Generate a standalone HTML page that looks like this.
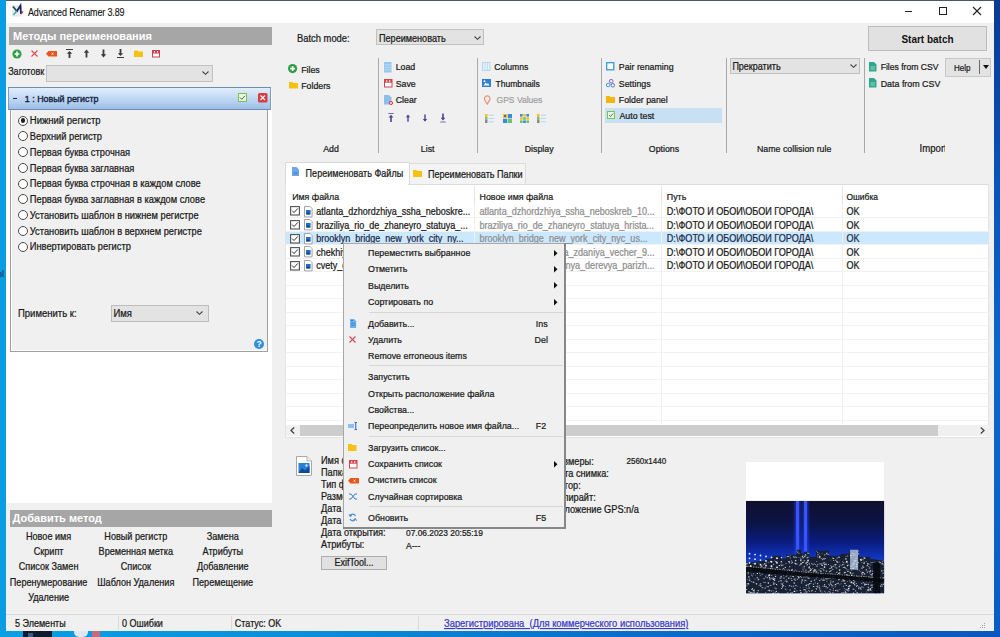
<!DOCTYPE html>
<html><head><meta charset="utf-8">
<style>
html,body{margin:0;padding:0;}
body{width:1000px;height:637px;overflow:hidden;position:relative;background:#0b62c8;font-family:"Liberation Sans",sans-serif;font-size:9px;color:#1a1a1a;}
.a{position:absolute;}
.t{position:absolute;white-space:nowrap;line-height:12px;height:12px;-webkit-text-stroke:0.22px currentColor;transform:translateY(0.9px) scaleY(1.12);transform-origin:0 76%;}
.c{text-align:center;}
svg{position:absolute;overflow:visible;}
</style></head><body>
<!-- desktop -->
<div class="a" style="left:0;top:0;width:6px;height:637px;background:#0a9de2;"></div>
<div class="a" style="left:994px;top:0;width:6px;height:637px;background:linear-gradient(#0a3a92 0%,#0a50b5 25%,#0c64cc 55%,#0b62ca 80%,#0a5cc4 100%);"></div>
<div class="a" style="left:0;top:631px;width:1000px;height:6px;background:linear-gradient(90deg,#0aa0e4 0%,#0a8fd8 30%,#0a6fcc 60%,#0a56bf 100%);"></div>

<div class="a" style="left:22.5px;top:631px;width:29px;height:6px;background:#0d1a30;"></div>
<div class="a" style="left:28px;top:633px;width:5px;height:4px;background:#3a5a8a;"></div>
<div class="a" style="left:74px;top:631px;width:14px;height:6px;background:#dfe8ee;border-radius:0 0 5px 5px;"></div>
<div class="a" style="left:92px;top:631px;width:8px;height:6px;background:#c86a7a;"></div>
<div class="a" style="left:0;top:270px;width:5px;height:8px;overflow:hidden;"><div style="position:absolute;left:-3px;top:-2px;font-size:9px;color:#1a2a3a;line-height:12px;">ol</div></div>
<!-- window -->
<div class="a" id="win" style="left:6px;top:0;width:988px;height:631px;background:#f0f0f0;">
</div>
<div class="a" style="left:6px;top:0;width:988px;height:1px;background:#4d5866;"></div>
<div class="a" style="left:6px;top:1px;width:988px;height:22px;background:#fff;"></div>


<!-- title bar -->
<svg style="left:12px;top:5px" width="12" height="12" viewBox="0 0 12 12">
 <rect x="0" y="0" width="9" height="11.5" fill="#e6ecf2"/>
 <path d="M1 1.5L5.5 7" stroke="#34404c" stroke-width="1.7" fill="none"/>
 <path d="M1.5 10L6 4" stroke="#4cae9c" stroke-width="1.5" fill="none"/>
 <path d="M5 6L8.5 0.5L9 9" stroke="#1c2462" stroke-width="1.8" fill="none"/>
 <path d="M8.8 9L11 6.5" stroke="#a8384a" stroke-width="1.4" fill="none"/>
</svg>
<div class="t" style="left:28px;top:5.6px;font-size:9px;letter-spacing:-0.15px;color:#111;-webkit-text-stroke:0.1px #111;">Advanced Renamer 3.89</div>
<div class="a" style="left:905px;top:11px;width:7px;height:1px;background:#222;"></div>
<div class="a" style="left:938.5px;top:7px;width:6px;height:6px;border:1.2px solid #222;"></div>
<svg style="left:973px;top:7px" width="8" height="8" viewBox="0 0 8 8"><path d="M0 0L8 8M8 0L0 8" stroke="#222" stroke-width="1.1"/></svg>

<!-- left panel top -->
<div class="a" style="left:6px;top:88px;width:266px;height:415px;background:#fff;"></div>
<div class="a" style="left:9px;top:27px;width:263px;height:18px;background:#a6a6a6;"></div>
<div class="t" style="left:13px;top:30px;font-size:11px;font-weight:bold;color:#fff;-webkit-text-stroke:0;transform:translateY(0.3px) scaleY(1.05);">Методы переименования</div>


<!-- left toolbar icons -->
<svg style="left:11.7px;top:48.8px" width="10" height="10" viewBox="0 0 10 10"><circle cx="5" cy="5" r="4.6" fill="#2f9e44"/><path d="M5 2.6V7.4M2.6 5H7.4" stroke="#fff" stroke-width="1.6"/></svg>
<svg style="left:30.6px;top:50.4px" width="7" height="7" viewBox="0 0 7 7"><path d="M0.5 0.5L6.5 6.5M6.5 0.5L0.5 6.5" stroke="#e0474c" stroke-width="1.1"/></svg>
<svg style="left:46px;top:51px" width="11" height="5.5" viewBox="0 0 11 5.5"><path d="M2.5 0H11V5.5H2.5L0 2.75Z" fill="#e8561e"/><path d="M5.5 1.8L7.5 3.7M7.5 1.8L5.5 3.7" stroke="#fff" stroke-width="0.8"/></svg>
<svg style="left:65.8px;top:48.8px" width="7" height="9" viewBox="0 0 7 9"><path d="M0 0.5H7" stroke="#3b3b3b" stroke-width="1"/><path d="M3.5 2L0.8 4.8H2.6V9H4.4V4.8H6.2Z" fill="#3b3b3b"/></svg>
<svg style="left:83px;top:48.8px" width="7" height="9" viewBox="0 0 7 9"><path d="M3.5 0.5L0.8 3.8H2.6V8.5H4.4V3.8H6.2Z" fill="#3b3b3b"/></svg>
<svg style="left:100px;top:48.8px" width="7" height="9" viewBox="0 0 7 9"><path d="M3.5 8.5L0.8 5.2H2.6V0.5H4.4V5.2H6.2Z" fill="#3b3b3b"/></svg>
<svg style="left:116.8px;top:48.8px" width="7" height="9" viewBox="0 0 7 9"><path d="M3.5 7L0.8 4.2H2.6V0H4.4V4.2H6.2Z" fill="#3b3b3b"/><path d="M0 8.5H7" stroke="#3b3b3b" stroke-width="1"/></svg>
<svg style="left:133.8px;top:49.9px" width="9" height="7" viewBox="0 0 9 7"><path d="M0 0.5H3.5L4.5 1.5H9V7H0Z" fill="#f5c211"/></svg>
<svg style="left:151.9px;top:49.6px" width="8" height="7.5" viewBox="0 0 8 7.5"><rect x="0.5" y="0.5" width="7" height="6.5" fill="#fff" stroke="#c9434b" stroke-width="1"/><rect x="0.5" y="0.5" width="7" height="3" fill="#c9434b"/><rect x="2" y="1" width="1" height="1.5" fill="#fff"/><rect x="5" y="1" width="1" height="1.5" fill="#fff"/></svg>

<div class="t" style="left:8.2px;top:64.5px;font-size:9px;">Заготовк</div>
<div class="a" style="left:45.8px;top:65.3px;width:165.2px;height:14.3px;background:#e3e3e3;border:1px solid #c2c2c2;"></div>
<svg style="left:202px;top:71px" width="7" height="4" viewBox="0 0 7 4"><path d="M0.5 0.5L3.5 3.3L6.5 0.5" stroke="#444" stroke-width="1.1" fill="none"/></svg>

<!-- blue panel header -->
<div class="a" style="left:8px;top:87.4px;width:260.5px;height:20.6px;border:1px solid #7f9fc0;border-top-color:#6d8fa8;border-bottom-color:#6d8bb3;background:linear-gradient(#e2eefb,#c4daf4 45%,#9ebfea);"></div>
<div class="a" style="left:13.4px;top:98px;width:3.6px;height:1.2px;background:#1b2b48;"></div>
<div class="t" style="left:24.8px;top:92.4px;font-size:8.9px;color:#16243f;-webkit-text-stroke:0.35px #16243f;">1 : Новый регистр</div>
<svg style="left:237.5px;top:93px" width="9" height="9" viewBox="0 0 9 9"><rect x="0.5" y="0.5" width="8" height="8" fill="#e9f6df" stroke="#7cc05a" stroke-width="1"/><path d="M2 4.5L3.8 6.3L7 2.8" stroke="#3a7a2a" stroke-width="1" fill="none"/></svg>
<svg style="left:257.8px;top:92.5px" width="9.5" height="9.5" viewBox="0 0 9.5 9.5"><rect x="0" y="0" width="9.5" height="9.5" rx="1.5" fill="#d83c3c"/><path d="M2.5 2.5L7 7M7 2.5L2.5 7" stroke="#fff" stroke-width="1.1"/></svg>

<!-- panel box -->
<div class="a" style="left:10.2px;top:110px;width:256.3px;height:240.8px;border:1px solid #a0a0a0;border-top:none;background:#f0f0f0;box-shadow:inset 1px 0 0 #fff, inset 0 -1px 0 #fff;"></div>
<div class="a" style="left:18.2px;top:115.60px;width:8px;height:8px;border:0.8px solid #4a4a4a;border-radius:50%;background:#fff;"></div>
<div class="a" style="left:20.6px;top:118.00px;width:4.8px;height:4.8px;border-radius:50%;background:#222;"></div>
<div class="t" style="left:29.8px;top:114.40px;font-size:9.5px;">Нижний регистр</div>
<div class="a" style="left:18.2px;top:131.35px;width:8px;height:8px;border:0.8px solid #4a4a4a;border-radius:50%;background:#fff;"></div>
<div class="t" style="left:29.8px;top:130.15px;font-size:9.3px;">Верхний регистр</div>
<div class="a" style="left:18.2px;top:147.10px;width:8px;height:8px;border:0.8px solid #4a4a4a;border-radius:50%;background:#fff;"></div>
<div class="t" style="left:29.8px;top:145.90px;font-size:9.3px;">Первая буква строчная</div>
<div class="a" style="left:18.2px;top:162.85px;width:8px;height:8px;border:0.8px solid #4a4a4a;border-radius:50%;background:#fff;"></div>
<div class="t" style="left:29.8px;top:161.65px;font-size:9.3px;">Первая буква заглавная</div>
<div class="a" style="left:18.2px;top:178.60px;width:8px;height:8px;border:0.8px solid #4a4a4a;border-radius:50%;background:#fff;"></div>
<div class="t" style="left:29.8px;top:177.40px;font-size:9.3px;">Первая буква строчная в каждом слове</div>
<div class="a" style="left:18.2px;top:194.35px;width:8px;height:8px;border:0.8px solid #4a4a4a;border-radius:50%;background:#fff;"></div>
<div class="t" style="left:29.8px;top:193.15px;font-size:9.3px;">Первая буква заглавная в каждом слове</div>
<div class="a" style="left:18.2px;top:210.10px;width:8px;height:8px;border:0.8px solid #4a4a4a;border-radius:50%;background:#fff;"></div>
<div class="t" style="left:29.8px;top:208.90px;font-size:9.3px;">Установить шаблон в нижнем регистре</div>
<div class="a" style="left:18.2px;top:225.85px;width:8px;height:8px;border:0.8px solid #4a4a4a;border-radius:50%;background:#fff;"></div>
<div class="t" style="left:29.8px;top:224.65px;font-size:9.3px;">Установить шаблон в верхнем регистре</div>
<div class="a" style="left:18.2px;top:241.60px;width:8px;height:8px;border:0.8px solid #4a4a4a;border-radius:50%;background:#fff;"></div>
<div class="t" style="left:29.8px;top:240.40px;font-size:9.3px;">Инвертировать регистр</div>

<div class="t" style="left:18px;top:307px;font-size:9.5px;">Применить к:</div>
<div class="a" style="left:110.5px;top:305.3px;width:96px;height:14.6px;background:#e3e3e3;border:1px solid #bdbdbd;"></div>
<div class="t" style="left:113.5px;top:307px;font-size:9.5px;">Имя</div>
<svg style="left:196px;top:311px" width="7" height="4" viewBox="0 0 7 4"><path d="M0.5 0.5L3.5 3.3L6.5 0.5" stroke="#444" stroke-width="1.1" fill="none"/></svg>
<svg style="left:254px;top:339px" width="10" height="10" viewBox="0 0 10 10"><circle cx="5" cy="5" r="5" fill="#2d8fd8"/><text x="5" y="8.3" font-size="8.5" font-weight="bold" text-anchor="middle" fill="#fff" font-family="Liberation Sans">?</text></svg>


<!-- add method -->
<div class="a" style="left:9.8px;top:509.8px;width:261.8px;height:16.8px;background:#a6a6a6;"></div>
<div class="t" style="left:12.6px;top:512px;font-size:11px;font-weight:bold;color:#fff;-webkit-text-stroke:0;transform:translateY(0.3px) scaleY(1.05);">Добавить метод</div>
<div class="t c" style="left:-1.4px;width:100px;top:530.4px;font-size:9.1px;">Новое имя</div>
<div class="t c" style="left:85.8px;width:100px;top:530.4px;font-size:9.1px;">Новый регистр</div>
<div class="t c" style="left:172.8px;width:100px;top:530.4px;font-size:9.1px;">Замена</div>
<div class="t c" style="left:-1.4px;width:100px;top:545.2px;font-size:9.1px;">Скрипт</div>
<div class="t c" style="left:85.8px;width:100px;top:545.2px;font-size:9.1px;">Временная метка</div>
<div class="t c" style="left:172.8px;width:100px;top:545.2px;font-size:9.1px;">Атрибуты</div>
<div class="t c" style="left:-1.4px;width:100px;top:560.4px;font-size:9.1px;">Список Замен</div>
<div class="t c" style="left:85.8px;width:100px;top:560.4px;font-size:9.1px;">Список</div>
<div class="t c" style="left:172.8px;width:100px;top:560.4px;font-size:9.1px;">Добавление</div>
<div class="t c" style="left:-1.4px;width:100px;top:575.5px;font-size:9.1px;">Перенумерование</div>
<div class="t c" style="left:85.8px;width:100px;top:575.5px;font-size:9.1px;">Шаблон Удаления</div>
<div class="t c" style="left:172.8px;width:100px;top:575.5px;font-size:9.1px;">Перемещение</div>
<div class="t c" style="left:-1.4px;width:100px;top:590.6px;font-size:9.1px;">Удаление</div>

<!-- status bar -->
<div class="a" style="left:6px;top:614px;width:988px;height:1px;background:#dadada;"></div>
<div class="a" style="left:118px;top:616px;width:1px;height:14px;background:#dadada;"></div>
<div class="a" style="left:231px;top:616px;width:1px;height:14px;background:#dadada;"></div>
<div class="a" style="left:418px;top:616px;width:1px;height:14px;background:#dadada;"></div>
<div class="t" style="left:15px;top:617px;font-size:9px;">5 Элементы</div>
<div class="t" style="left:122px;top:617px;font-size:9px;">0 Ошибки</div>
<div class="t" style="left:234.8px;top:617px;font-size:9px;">Статус: OK</div>
<div class="t" style="left:444px;top:617px;font-size:9.4px;color:#3a3ac8;text-decoration:underline;">Зарегистрирована &nbsp;(Для коммерческого использования)</div>

<div class="a" style="left:984px;top:627px;width:1px;height:1px;background:#a0a0a0;"></div><div class="a" style="left:982px;top:627px;width:1px;height:1px;background:#a0a0a0;"></div><div class="a" style="left:980px;top:627px;width:1px;height:1px;background:#a0a0a0;"></div><div class="a" style="left:984px;top:625px;width:1px;height:1px;background:#a0a0a0;"></div><div class="a" style="left:982px;top:625px;width:1px;height:1px;background:#a0a0a0;"></div><div class="a" style="left:984px;top:623px;width:1px;height:1px;background:#a0a0a0;"></div>
<!-- ribbon -->
<div class="t" style="left:297px;top:32.0px;font-size:9.4px;">Batch mode:</div>
<div class="a" style="left:376px;top:29px;width:105.6px;height:14.4px;background:#e3e3e3;border:1px solid #c0c0c0;"></div>
<div class="t" style="left:379px;top:31.5px;font-size:9.1px;">Переименовать</div>
<svg style="left:474px;top:35.5px" width="7" height="4" viewBox="0 0 7 4"><path d="M0.5 0.5L3.5 3.3L6.5 0.5" stroke="#444" stroke-width="1.1" fill="none"/></svg>
<div class="a" style="left:868px;top:26.3px;width:117px;height:22.6px;background:#e1e1e1;border:1px solid #bdbdbd;"></div>
<div class="t c" style="left:877.5px;width:100px;top:33px;font-size:10px;font-weight:bold;color:#111;-webkit-text-stroke:0;">Start batch</div>
<div class="a" style="left:378.0px;top:58px;width:1px;height:95px;background:#a8a8a8;"></div>
<div class="a" style="left:477.2px;top:58px;width:1px;height:95px;background:#a8a8a8;"></div>
<div class="a" style="left:601.4px;top:58px;width:1px;height:95px;background:#a8a8a8;"></div>
<div class="a" style="left:725.9px;top:58px;width:1px;height:95px;background:#a8a8a8;"></div>
<div class="a" style="left:863.6px;top:58px;width:1px;height:95px;background:#a8a8a8;"></div>
<svg style="left:287.9px;top:64.4px" width="9.2" height="9.2" viewBox="0 0 10 10"><circle cx="5" cy="5" r="5" fill="#2f9e44"/><path d="M5 2.4V7.6M2.4 5H7.6" stroke="#fff" stroke-width="1.8"/></svg>
<svg style="left:288.5px;top:82px" width="9" height="6.5" viewBox="0 0 9 6.5"><path d="M0 0H3.5L4.5 1H9V6.5H0Z" fill="#f5c211"/></svg>
<div class="t" style="left:301.2px;top:63.0px;font-size:8.8px;">Files</div>
<div class="t" style="left:301.2px;top:79.4px;font-size:8.8px;">Folders</div>
<div class="t c" style="left:281px;width:100px;top:141.5px;font-size:8.8px;">Add</div>
<svg style="left:383.5px;top:61.5px" width="8" height="10" viewBox="0 0 8 10"><rect x="0" y="0" width="7.5" height="10.5" fill="#94c7ef"/><path d="M0.5 2.8H7M0.5 5.3H7M0.5 7.8H7" stroke="#cfe5f8" stroke-width="0.7"/></svg>
<svg style="left:383.5px;top:78.5px" width="8.5" height="8.5" viewBox="0 0 8.5 8.5"><rect x="0.5" y="0.5" width="7.5" height="7.5" fill="#fff" stroke="#d2464e" stroke-width="1"/><rect x="0.5" y="0.5" width="7.5" height="3.2" fill="#d2464e"/><rect x="2.2" y="1.2" width="1.1" height="1.6" fill="#fff"/><rect x="5.2" y="1.2" width="1.1" height="1.6" fill="#fff"/></svg>
<svg style="left:383.5px;top:94.5px" width="9.5" height="10" viewBox="0 0 9.5 10"><path d="M0 0H5L7.5 2.5V9.5H0Z" fill="#8dbde9"/><circle cx="7" cy="8" r="1.6" fill="#f4d0d0" stroke="#d84040" stroke-width="1"/></svg>
<div class="t" style="left:395.7px;top:60.4px;font-size:8.8px;">Load</div>
<div class="t" style="left:395.7px;top:76.8px;font-size:8.8px;">Save</div>
<div class="t" style="left:395.7px;top:93.2px;font-size:8.8px;">Clear</div>
<svg style="left:387.9px;top:112.6px" width="6" height="9.5" viewBox="0 0 6 9.5"><path d="M0.3 0.5H5.7" stroke="#50508a" stroke-width="0.8"/><path d="M3 1.8L0.6 4.6H2.2V9H3.8V4.6H5.4Z" fill="#46468a"/></svg>
<svg style="left:405.1px;top:112.6px" width="6" height="9.5" viewBox="0 0 6 9.5"><path d="M3 1.5L0.8 4.2H2.3V8.8H3.7V4.2H5.2Z" fill="#46468a"/></svg>
<svg style="left:422px;top:112.6px" width="6" height="9.5" viewBox="0 0 6 9.5"><path d="M3 8.8L0.8 6H2.3V1.5H3.7V6H5.2Z" fill="#46468a"/></svg>
<svg style="left:439.7px;top:112.6px" width="6" height="9.5" viewBox="0 0 6 9.5"><path d="M3 7.6L0.6 4.8H2.2V0.5H3.8V4.8H5.4Z" fill="#46468a"/><path d="M0.3 9H5.7" stroke="#50508a" stroke-width="0.8"/></svg>
<div class="t c" style="left:377.7px;width:100px;top:141.8px;font-size:8.8px;">List</div>
<svg style="left:482px;top:62px" width="8.5" height="9" viewBox="0 0 8.5 9"><rect x="0.5" y="0.5" width="7.5" height="8" fill="#e6f2fb" stroke="#b5d6f0" stroke-width="1"/><path d="M3 0.5V8.5M5.5 0.5V8.5" stroke="#b5d6f0" stroke-width="0.8"/></svg>
<svg style="left:482px;top:78.5px" width="9" height="8" viewBox="0 0 9 8"><rect x="0" y="0" width="9" height="8" fill="#2f7fd0"/><path d="M1.5 6.5L3.5 3.5L5 5L6 4L7.5 6.5Z" fill="#fff"/><circle cx="2.5" cy="2.2" r="0.9" fill="#fff"/></svg>
<svg style="left:483.5px;top:94.5px" width="6.5" height="9.5" viewBox="0 0 6.5 9.5"><path d="M3.25 9L0.8 5A2.8 2.8 0 1 1 5.7 5Z" fill="none" stroke="#ec8c6c" stroke-width="1.2"/></svg>
<div class="t" style="left:494.3px;top:60.4px;font-size:8.6px;">Columns</div>
<div class="t" style="left:495.4px;top:76.8px;font-size:8.6px;">Thumbnails</div>
<div class="t" style="left:496.6px;top:93.2px;font-size:8.5px;color:#a0a0a0;">GPS Values</div>
<svg style="left:485.2px;top:113.5px" width="9" height="9" viewBox="0 0 9 9"><rect x="0" y="0" width="2.5" height="3" fill="#f2c12e"/><rect x="0" y="3" width="2.5" height="3" fill="#7bc47f"/><rect x="0" y="6" width="2.5" height="3" fill="#8a8a8a"/><path d="M3.5 1.2H9M3.5 4.5H9M3.5 7.8H9" stroke="#b9d6ee" stroke-width="1"/></svg>
<svg style="left:502.5px;top:113.5px" width="9" height="9" viewBox="0 0 9 9"><rect x="0" y="0" width="4.2" height="4.2" fill="#f2c12e"/><rect x="4.8" y="0" width="4.2" height="4.2" fill="#3a8ad8"/><rect x="0" y="4.8" width="4.2" height="4.2" fill="#3a8ad8"/><rect x="4.8" y="4.8" width="4.2" height="4.2" fill="#6cc070"/><rect x="1" y="1" width="2" height="2" fill="#4a6ab0"/></svg>
<svg style="left:519.7px;top:113.5px" width="9" height="9" viewBox="0 0 9 9"><rect x="0" y="0" width="2.6" height="2.6" fill="#3a8ad8"/><rect x="3.2" y="0" width="2.6" height="2.6" fill="#f2c12e"/><rect x="6.4" y="0" width="2.6" height="2.6" fill="#3a8ad8"/><rect x="0" y="3.2" width="2.6" height="2.6" fill="#f2c12e"/><rect x="3.2" y="3.2" width="2.6" height="2.6" fill="#6cc070"/><rect x="6.4" y="3.2" width="2.6" height="2.6" fill="#f2c12e"/><rect x="0" y="6.4" width="2.6" height="2.6" fill="#6cc070"/><rect x="3.2" y="6.4" width="2.6" height="2.6" fill="#3a8ad8"/><rect x="6.4" y="6.4" width="2.6" height="2.6" fill="#6cc070"/></svg>
<svg style="left:537.0px;top:113.5px" width="9" height="9" viewBox="0 0 9 9"><rect x="0" y="0" width="2.5" height="3" fill="#f2c12e"/><rect x="0" y="3" width="2.5" height="3" fill="#7bc47f"/><rect x="0" y="6" width="2.5" height="3" fill="#8a8a8a"/><path d="M3.5 1.2H9M3.5 4.5H9M3.5 7.8H9" stroke="#b9d6ee" stroke-width="1"/></svg>
<div class="t c" style="left:489.20000000000005px;width:100px;top:141.8px;font-size:8.8px;">Display</div>
<div class="a" style="left:605px;top:107.5px;width:117.2px;height:15.3px;background:#c7e0f4;"></div>
<svg style="left:606px;top:62px" width="8.5" height="8.5" viewBox="0 0 8.5 8.5"><rect x="0.7" y="0.7" width="7.1" height="7.1" fill="#fff" stroke="#3a9ad9" stroke-width="1.3"/></svg>
<svg style="left:606px;top:78.5px" width="9" height="8.5" viewBox="0 0 9 8.5"><circle cx="5.2" cy="2.2" r="1.8" fill="none" stroke="#6a6ad0" stroke-width="1"/><circle cx="2.2" cy="6" r="1.8" fill="none" stroke="#3a9ad9" stroke-width="1"/><circle cx="6.8" cy="6.3" r="1.8" fill="none" stroke="#6a6ad0" stroke-width="1"/></svg>
<svg style="left:606px;top:95.5px" width="9" height="7" viewBox="0 0 9 7"><path d="M0 0H3.5L4.5 1H9V7H0Z" fill="#f5b50f"/></svg>
<svg style="left:606.5px;top:111px" width="8" height="8" viewBox="0 0 8 8"><rect x="0.5" y="0.5" width="7" height="7" fill="#e8f5de" stroke="#7cc05a" stroke-width="1"/><path d="M2 4L3.5 5.5L6.2 2.5" stroke="#3a7a2a" stroke-width="0.9" fill="none"/></svg>
<div class="t" style="left:618.8px;top:60.4px;font-size:8.8px;">Pair renaming</div>
<div class="t" style="left:618.8px;top:76.8px;font-size:8.8px;">Settings</div>
<div class="t" style="left:618.8px;top:93.2px;font-size:8.8px;">Folder panel</div>
<div class="t" style="left:619.5px;top:109.2px;font-size:8.8px;">Auto test</div>
<div class="t c" style="left:614px;width:100px;top:141.8px;font-size:8.8px;">Options</div>
<div class="a" style="left:729.5px;top:57.8px;width:128.3px;height:14px;background:#e3e3e3;border:1px solid #c0c0c0;"></div>
<div class="t" style="left:732.4px;top:60.0px;font-size:9px;">Прекратить</div>
<svg style="left:850px;top:64px" width="7" height="4" viewBox="0 0 7 4"><path d="M0.5 0.5L3.5 3.3L6.5 0.5" stroke="#444" stroke-width="1.1" fill="none"/></svg>
<div class="t c" style="left:744.2px;width:100px;top:141.8px;font-size:8.8px;">Name collision rule</div>
<svg style="left:869px;top:61.900000000000006px" width="7.5" height="9.5" viewBox="0 0 7.5 9.5"><path d="M0 0H5L7.5 2.5V9.5H0Z" fill="#2fa98a"/><path d="M1.5 5H6M1.5 7H6" stroke="#bfe8da" stroke-width="0.7"/></svg>
<svg style="left:869px;top:78.3px" width="7.5" height="9.5" viewBox="0 0 7.5 9.5"><path d="M0 0H5L7.5 2.5V9.5H0Z" fill="#2fa98a"/><path d="M1.5 5H6M1.5 7H6" stroke="#bfe8da" stroke-width="0.7"/></svg>
<div class="t" style="left:880.7px;top:60.4px;font-size:8.6px;">Files from CSV</div>
<div class="t" style="left:880.7px;top:76.8px;font-size:8.9px;">Data from CSV</div>
<div class="a" style="left:945.1px;top:58.3px;width:43.7px;height:16.9px;background:#e3e3e3;border:1px solid #c8c8c8;"></div>
<div class="a" style="left:978.5px;top:60px;width:1.6px;height:14px;background:#6a6a6a;"></div>
<svg style="left:982.5px;top:65px" width="6" height="4" viewBox="0 0 6 4"><path d="M0 0H6L3 4Z" fill="#111"/></svg>
<div class="t" style="left:954px;top:61.5px;font-size:8px;">Help</div>
<div class="a" style="left:919.6px;top:141.8px;width:25.4px;height:13px;overflow:hidden;"><div class="t" style="left:0;top:0;font-size:9.6px;">Import</div></div>

<!-- list -->
<div class="a" style="left:409px;top:162.7px;width:115.2px;height:20px;background:#f4f4f4;border:1px solid #dcdcdc;border-bottom:none;"></div>
<div class="a" style="left:284.6px;top:161.8px;width:123.4px;height:22px;background:#fff;border:1px solid #d9d9d9;border-bottom:none;"></div>
<svg style="left:292.2px;top:167.3px" width="7" height="9" viewBox="0 0 7 9"><path d="M0 0H4.5L7 2.5V9H0Z" fill="#6fa8e6"/><path d="M1.3 5.5H5.7M1.3 7H5.7" stroke="#3d7fd0" stroke-width="0.7"/></svg>
<div class="t" style="left:305.6px;top:166.50px;font-size:9.05px;">Переименовать Файлы</div>
<svg style="left:413.2px;top:169.7px" width="9" height="7" viewBox="0 0 9 7"><path d="M0 0H3.5L4.5 1H9V7H0Z" fill="#f5c211"/></svg>
<div class="t" style="left:427.9px;top:167.50px;font-size:9.1px;">Переименовать Папки</div>
<div class="a" style="left:284.6px;top:183.5px;width:704.4px;height:254.5px;background:#fff;border:1px solid #e3e3e3;border-top-color:#dcdcdc;box-sizing:border-box;"></div>
<div class="a" style="left:474.1px;top:186px;width:1px;height:18px;background:#e5e5e5;"></div>
<div class="a" style="left:661.3px;top:186px;width:1px;height:18px;background:#e5e5e5;"></div>
<div class="a" style="left:841.5px;top:186px;width:1px;height:18px;background:#e5e5e5;"></div>
<div class="t" style="left:292.2px;top:190.20px;font-size:8.85px;">Имя файла</div>
<div class="t" style="left:479.5px;top:190.20px;font-size:8.85px;">Новое имя файла</div>
<div class="t" style="left:666.8px;top:190.20px;font-size:8.85px;">Путь</div>
<div class="t" style="left:846.5px;top:190.20px;font-size:8.45px;">Ошибка</div>
<div class="a" style="left:285.6px;top:183px;width:122px;height:2px;background:#fff;"></div>
<div class="a" style="left:285.6px;top:231.1px;width:703px;height:13.3px;background:#cce8ff;"></div>
<div class="a" style="left:285.6px;top:217.10px;width:703px;height:1px;background:#f2f2f2;"></div>
<div class="a" style="left:285.6px;top:230.60px;width:703px;height:1px;background:#f2f2f2;"></div>
<div class="a" style="left:285.6px;top:244.10px;width:703px;height:1px;background:#f2f2f2;"></div>
<div class="a" style="left:285.6px;top:257.60px;width:703px;height:1px;background:#f2f2f2;"></div>
<div class="a" style="left:285.6px;top:271.10px;width:703px;height:1px;background:#f2f2f2;"></div>
<div class="a" style="left:285.6px;top:284.60px;width:703px;height:1px;background:#f2f2f2;"></div>
<div class="a" style="left:285.6px;top:298.10px;width:703px;height:1px;background:#f2f2f2;"></div>
<div class="a" style="left:285.6px;top:311.60px;width:703px;height:1px;background:#f2f2f2;"></div>
<div class="a" style="left:285.6px;top:325.10px;width:703px;height:1px;background:#f2f2f2;"></div>
<div class="a" style="left:285.6px;top:338.60px;width:703px;height:1px;background:#f2f2f2;"></div>
<div class="a" style="left:285.6px;top:352.10px;width:703px;height:1px;background:#f2f2f2;"></div>
<div class="a" style="left:285.6px;top:365.60px;width:703px;height:1px;background:#f2f2f2;"></div>
<div class="a" style="left:285.6px;top:379.10px;width:703px;height:1px;background:#f2f2f2;"></div>
<div class="a" style="left:285.6px;top:392.60px;width:703px;height:1px;background:#f2f2f2;"></div>
<div class="a" style="left:285.6px;top:406.10px;width:703px;height:1px;background:#f2f2f2;"></div>
<div class="a" style="left:285.6px;top:419.60px;width:703px;height:1px;background:#f2f2f2;"></div>
<div class="a" style="left:474.1px;top:204px;width:1px;height:220px;background:#f0f0f0;"></div>
<div class="a" style="left:661.3px;top:204px;width:1px;height:220px;background:#f0f0f0;"></div>
<div class="a" style="left:841.5px;top:204px;width:1px;height:220px;background:#f0f0f0;"></div>
<svg style="left:290.3px;top:206.40px" width="10" height="9.6" viewBox="0 0 10 9.6"><rect x="0.6" y="0.6" width="8.8" height="8.4" fill="#fff" stroke="#505050" stroke-width="1.1"/><path d="M2.2 4.6L4 6.6L7.8 2.4" stroke="#333" stroke-width="1" fill="none"/></svg>
<svg style="left:304.2px;top:205.60px" width="8.6" height="11.4" viewBox="0 0 8.6 11.4"><path d="M0.5 0.5H6L8.1 2.6V10.9H0.5Z" fill="#fff" stroke="#9a9a9a" stroke-width="0.9"/><rect x="2" y="4" width="4.6" height="4.4" fill="#1f6fc4"/><path d="M2 8.4L4 6L6.6 8.4Z" fill="#0d3f86"/></svg>
<div class="t" style="left:316.2px;top:205.00px;font-size:9px;color:#1a1a1a;">atlanta_dzhordzhiya_ssha_neboskre...</div>
<div class="t" style="left:479.5px;top:205.00px;font-size:9.05px;color:#8e8e8e;">atlanta_dzhordzhiya_ssha_neboskreb_10...</div>
<div class="t" style="left:666.8px;top:205.00px;font-size:9.1px;color:#1a1a1a;">D:\ФОТО И ОБОИ\ОБОИ ГОРОДА\</div>
<div class="t" style="left:846.5px;top:205.00px;font-size:9px;color:#1a1a1a;">OK</div>
<svg style="left:290.3px;top:219.95px" width="10" height="9.6" viewBox="0 0 10 9.6"><rect x="0.6" y="0.6" width="8.8" height="8.4" fill="#fff" stroke="#505050" stroke-width="1.1"/><path d="M2.2 4.6L4 6.6L7.8 2.4" stroke="#333" stroke-width="1" fill="none"/></svg>
<svg style="left:304.2px;top:219.15px" width="8.6" height="11.4" viewBox="0 0 8.6 11.4"><path d="M0.5 0.5H6L8.1 2.6V10.9H0.5Z" fill="#fff" stroke="#9a9a9a" stroke-width="0.9"/><rect x="2" y="4" width="4.6" height="4.4" fill="#1f6fc4"/><path d="M2 8.4L4 6L6.6 8.4Z" fill="#0d3f86"/></svg>
<div class="t" style="left:316.2px;top:218.55px;font-size:9px;color:#1a1a1a;">braziliya_rio_de_zhaneyro_statuya_...</div>
<div class="t" style="left:479.5px;top:218.55px;font-size:9.05px;color:#8e8e8e;">braziliya_rio_de_zhaneyro_statuya_hrista...</div>
<div class="t" style="left:666.8px;top:218.55px;font-size:9.1px;color:#1a1a1a;">D:\ФОТО И ОБОИ\ОБОИ ГОРОДА\</div>
<div class="t" style="left:846.5px;top:218.55px;font-size:9px;color:#1a1a1a;">OK</div>
<svg style="left:290.3px;top:233.50px" width="10" height="9.6" viewBox="0 0 10 9.6"><rect x="0.6" y="0.6" width="8.8" height="8.4" fill="#fff" stroke="#505050" stroke-width="1.1"/><path d="M2.2 4.6L4 6.6L7.8 2.4" stroke="#333" stroke-width="1" fill="none"/></svg>
<svg style="left:304.2px;top:232.70px" width="8.6" height="11.4" viewBox="0 0 8.6 11.4"><path d="M0.5 0.5H6L8.1 2.6V10.9H0.5Z" fill="#fff" stroke="#9a9a9a" stroke-width="0.9"/><rect x="2" y="4" width="4.6" height="4.4" fill="#1f6fc4"/><path d="M2 8.4L4 6L6.6 8.4Z" fill="#0d3f86"/></svg>
<div class="t" style="left:316.2px;top:232.10px;font-size:9px;color:#1b2a4a;">brooklyn_bridge_new_york_city_ny...</div>
<div class="t" style="left:479.5px;top:232.10px;font-size:9.05px;color:#8e8e8e;">brooklyn_bridge_new_york_city_nyc_us...</div>
<div class="t" style="left:666.8px;top:232.10px;font-size:9.1px;color:#1b2a4a;">D:\ФОТО И ОБОИ\ОБОИ ГОРОДА\</div>
<div class="t" style="left:846.5px;top:232.10px;font-size:9px;color:#1b2a4a;">OK</div>
<svg style="left:290.3px;top:247.05px" width="10" height="9.6" viewBox="0 0 10 9.6"><rect x="0.6" y="0.6" width="8.8" height="8.4" fill="#fff" stroke="#505050" stroke-width="1.1"/><path d="M2.2 4.6L4 6.6L7.8 2.4" stroke="#333" stroke-width="1" fill="none"/></svg>
<svg style="left:304.2px;top:246.25px" width="8.6" height="11.4" viewBox="0 0 8.6 11.4"><path d="M0.5 0.5H6L8.1 2.6V10.9H0.5Z" fill="#fff" stroke="#9a9a9a" stroke-width="0.9"/><rect x="2" y="4" width="4.6" height="4.4" fill="#1f6fc4"/><path d="M2 8.4L4 6L6.6 8.4Z" fill="#0d3f86"/></svg>
<div class="t" style="left:316.2px;top:245.65px;font-size:9px;color:#1a1a1a;">chekhiya_praga_zdaniya_vecher...</div>
<div class="t" style="left:479.5px;width:175px;text-align:right;overflow:hidden;top:245.65px;font-size:9.05px;color:#8e8e8e;">chekhiya_praga_zdaniya_vecher_9...</div>
<div class="t" style="left:666.8px;top:245.65px;font-size:9.1px;color:#1a1a1a;">D:\ФОТО И ОБОИ\ОБОИ ГОРОДА\</div>
<div class="t" style="left:846.5px;top:245.65px;font-size:9px;color:#1a1a1a;">OK</div>
<svg style="left:290.3px;top:260.60px" width="10" height="9.6" viewBox="0 0 10 9.6"><rect x="0.6" y="0.6" width="8.8" height="8.4" fill="#fff" stroke="#505050" stroke-width="1.1"/><path d="M2.2 4.6L4 6.6L7.8 2.4" stroke="#333" stroke-width="1" fill="none"/></svg>
<svg style="left:304.2px;top:259.80px" width="8.6" height="11.4" viewBox="0 0 8.6 11.4"><path d="M0.5 0.5H6L8.1 2.6V10.9H0.5Z" fill="#fff" stroke="#9a9a9a" stroke-width="0.9"/><rect x="2" y="4" width="4.6" height="4.4" fill="#1f6fc4"/><path d="M2 8.4L4 6L6.6 8.4Z" fill="#0d3f86"/></svg>
<div class="t" style="left:316.2px;top:259.20px;font-size:9px;color:#1a1a1a;">cvety_derevya_parizh...</div>
<div class="t" style="left:479.5px;width:175px;text-align:right;overflow:hidden;top:259.20px;font-size:9.05px;color:#8e8e8e;">cvety_vishnya_derevya_parizh...</div>
<div class="t" style="left:666.8px;top:259.20px;font-size:9.1px;color:#1a1a1a;">D:\ФОТО И ОБОИ\ОБОИ ГОРОДА\</div>
<div class="t" style="left:846.5px;top:259.20px;font-size:9px;color:#1a1a1a;">OK</div>
<div class="a" style="left:285.6px;top:424.8px;width:703px;height:11.2px;background:#f0f0f0;"></div>
<div class="a" style="left:300.3px;top:424.8px;width:637.3px;height:11.2px;background:#cdcdcd;"></div>
<svg style="left:290px;top:427px" width="5" height="7" viewBox="0 0 5 7"><path d="M4.2 0.6L1 3.5L4.2 6.4" stroke="#444" stroke-width="1.3" fill="none"/></svg>
<svg style="left:979.5px;top:427px" width="5" height="7" viewBox="0 0 5 7"><path d="M0.8 0.6L4 3.5L0.8 6.4" stroke="#444" stroke-width="1.3" fill="none"/></svg>

<!-- details -->
<svg style="left:295.9px;top:456px" width="16" height="20" viewBox="0 0 16 20"><path d="M0.5 0.5H11L15.5 5V19.5H0.5Z" fill="#fff" stroke="#a8a8a8" stroke-width="1"/><path d="M11 0.5V5H15.5" fill="#f0f0f0" stroke="#a8a8a8" stroke-width="0.8"/><rect x="2.5" y="7" width="11" height="10" fill="#2a7fd4"/><path d="M2.5 17L6 12L9 14.5L13.5 10V17Z" fill="#0e4a99"/><circle cx="10.5" cy="9.5" r="1.2" fill="#bfe3ff"/></svg>
<div class="t" style="left:321px;top:453.70px;font-size:9.2px;">Имя файла:</div>
<div class="t" style="left:321px;top:465.80px;font-size:9.2px;">Папка:</div>
<div class="t" style="left:321px;top:477.90px;font-size:9.2px;">Тип файла:</div>
<div class="t" style="left:321px;top:490.00px;font-size:9.2px;">Размер:</div>
<div class="t" style="left:321px;top:502.10px;font-size:9.2px;">Дата создания:</div>
<div class="t" style="left:321px;top:514.20px;font-size:9.2px;">Дата изменения:</div>
<div class="t" style="left:321px;top:526.30px;font-size:9.2px;">Дата открытия:</div>
<div class="t" style="left:321px;top:538.40px;font-size:9.2px;">Атрибуты:</div>
<div class="t" style="left:406px;top:526.40px;font-size:8.4px;">07.06.2023 20:55:19</div>
<div class="t" style="left:406px;top:538.50px;font-size:8.6px;">A---</div>
<div class="t" style="left:553px;top:455.20px;font-size:9.2px;">Размеры:</div>
<div class="t" style="left:553px;top:467.25px;font-size:9.2px;">Дата снимка:</div>
<div class="t" style="left:553px;top:479.30px;font-size:9.2px;">Автор:</div>
<div class="t" style="left:553px;top:491.35px;font-size:9.2px;">Копирайт:</div>
<div class="t" style="left:553px;top:503.40px;font-size:9.2px;">Положение GPS:n/a</div>
<div class="t" style="left:626.5px;top:455.20px;font-size:8px;">2560x1440</div>
<div class="a" style="left:321.2px;top:556px;width:65.8px;height:14.4px;background:#e1e1e1;border:1px solid #adadad;box-sizing:border-box;"></div>
<div class="t c" style="left:321.2px;top:556.40px;width:65.8px;font-size:9px;">ExifTool...</div>
<div class="a" style="left:746.4px;top:461.8px;width:138.1px;height:38.4px;background:#fff;"></div>
<svg style="left:746.4px;top:500.5px" width="138.1" height="92.2" viewBox="0 0 138 92.7" preserveAspectRatio="none"><defs><linearGradient id="sky" x1="0" y1="0" x2="0" y2="1"><stop offset="0" stop-color="#100f2e"/><stop offset="0.25" stop-color="#0b1448"/><stop offset="0.45" stop-color="#0a1c80"/><stop offset="0.6" stop-color="#1032b8"/><stop offset="0.7" stop-color="#1c44d0"/><stop offset="1" stop-color="#1c44d0"/></linearGradient><filter id="gl" x="-1" y="0" width="3" height="1"><feGaussianBlur stdDeviation="1.2"/></filter></defs><rect width="138" height="92.7" fill="url(#sky)"/><rect x="48.5" y="0" width="6" height="60" fill="#2a44ff" opacity="0.55" filter="url(#gl)"/><rect x="56.5" y="0" width="6" height="60" fill="#2a44ff" opacity="0.55" filter="url(#gl)"/><rect x="50" y="0" width="3" height="58" fill="#3656ff"/><rect x="58" y="0" width="3" height="58" fill="#3656ff"/><path d="M0 92.7V62L20 60L20 58L26 58L27 55L35 55L35 58L40 58L40 54L50 54L51 49L55 49L55 53L58 53L58 51L63 51L63 56L70 56L70 50L83 50L83 55L93 55L96 53L103 53L104 49L112 49L113 56L124 56L124 58L138 60V92.7Z" fill="#182034"/><rect x="104" y="49" width="8" height="20" fill="#aabcdc" opacity="0.85"/><rect x="86.0" y="81.4" width="0.7" height="0.6" fill="#b0c0d8" opacity="0.76"/><rect x="130.2" y="77.4" width="0.8" height="0.6" fill="#f0ecd8" opacity="0.76"/><rect x="34.0" y="72.8" width="0.9" height="0.7" fill="#b0c0d8" opacity="0.88"/><rect x="56.3" y="57.0" width="0.8" height="0.7" fill="#e8f0e0" opacity="0.91"/><rect x="19.1" y="76.0" width="0.8" height="0.6" fill="#f0ecd8" opacity="0.99"/><rect x="0.7" y="82.8" width="1.4" height="1.1" fill="#f0ecd8" opacity="0.68"/><rect x="132.7" y="72.6" width="0.8" height="0.7" fill="#f0ecd8" opacity="0.99"/><rect x="27.2" y="91.2" width="0.9" height="0.8" fill="#e8f0e0" opacity="0.71"/><rect x="9.0" y="62.2" width="1.2" height="0.9" fill="#b0c0d8" opacity="0.82"/><rect x="49.0" y="62.4" width="0.8" height="0.7" fill="#d8e4f8" opacity="0.76"/><rect x="24.3" y="60.2" width="1.5" height="1.2" fill="#ffffff" opacity="0.71"/><rect x="55.8" y="73.0" width="1.0" height="0.8" fill="#e8f0e0" opacity="0.81"/><rect x="25.0" y="90.7" width="0.8" height="0.6" fill="#f0ecd8" opacity="0.66"/><rect x="113.1" y="69.2" width="1.0" height="0.8" fill="#b0c0d8" opacity="0.79"/><rect x="107.0" y="53.7" width="1.4" height="1.1" fill="#d8e4f8" opacity="0.57"/><rect x="47.0" y="75.7" width="1.0" height="0.8" fill="#f0ecd8" opacity="0.97"/><rect x="75.2" y="62.7" width="0.9" height="0.8" fill="#d8e4f8" opacity="0.91"/><rect x="86.5" y="80.5" width="1.5" height="1.2" fill="#d8e4f8" opacity="0.62"/><rect x="6.7" y="92.1" width="1.4" height="1.2" fill="#b0c0d8" opacity="0.56"/><rect x="102.2" y="64.0" width="1.1" height="0.9" fill="#d8e4f8" opacity="0.74"/><rect x="7.7" y="89.0" width="1.3" height="1.1" fill="#ffffff" opacity="0.70"/><rect x="28.6" y="91.9" width="1.5" height="1.2" fill="#b0c0d8" opacity="0.83"/><rect x="108.7" y="53.7" width="1.0" height="0.8" fill="#e8f0e0" opacity="0.58"/><rect x="58.0" y="55.2" width="1.4" height="1.1" fill="#b0c0d8" opacity="0.99"/><rect x="62.6" y="70.3" width="1.1" height="0.9" fill="#d8e4f8" opacity="0.68"/><rect x="55.7" y="55.4" width="1.4" height="1.1" fill="#e8f0e0" opacity="0.79"/><rect x="24.8" y="90.0" width="0.8" height="0.7" fill="#d8e4f8" opacity="0.77"/><rect x="71.1" y="73.0" width="1.0" height="0.8" fill="#b0c0d8" opacity="0.90"/><rect x="106.9" y="79.4" width="1.3" height="1.0" fill="#ffffff" opacity="0.71"/><rect x="97.2" y="61.3" width="0.9" height="0.7" fill="#e8f0e0" opacity="0.99"/><rect x="98.8" y="90.8" width="1.2" height="1.0" fill="#d8e4f8" opacity="0.81"/><rect x="1.6" y="72.9" width="1.0" height="0.8" fill="#d8e4f8" opacity="0.67"/><rect x="39.9" y="70.9" width="1.0" height="0.8" fill="#d8e4f8" opacity="0.84"/><rect x="101.8" y="85.2" width="1.4" height="1.2" fill="#d8e4f8" opacity="0.63"/><rect x="119.6" y="68.7" width="1.5" height="1.2" fill="#d8e4f8" opacity="0.78"/><rect x="73.0" y="56.3" width="1.4" height="1.2" fill="#d8e4f8" opacity="0.76"/><rect x="95.4" y="80.5" width="0.8" height="0.7" fill="#e8f0e0" opacity="0.90"/><rect x="80.2" y="78.1" width="0.9" height="0.8" fill="#e8f0e0" opacity="0.80"/><rect x="119.7" y="60.8" width="0.9" height="0.7" fill="#ffffff" opacity="0.81"/><rect x="86.1" y="56.9" width="1.2" height="1.0" fill="#f0ecd8" opacity="0.57"/><rect x="43.8" y="56.9" width="1.1" height="0.9" fill="#f0ecd8" opacity="0.74"/><rect x="48.5" y="78.0" width="1.2" height="0.9" fill="#ffffff" opacity="0.66"/><rect x="55.9" y="61.2" width="1.4" height="1.1" fill="#e8f0e0" opacity="0.86"/><rect x="75.5" y="91.1" width="1.2" height="1.0" fill="#b0c0d8" opacity="0.59"/><rect x="75.2" y="63.8" width="0.9" height="0.7" fill="#b0c0d8" opacity="0.71"/><rect x="17.8" y="66.9" width="1.2" height="1.0" fill="#b0c0d8" opacity="0.72"/><rect x="19.6" y="75.0" width="1.1" height="0.9" fill="#b0c0d8" opacity="0.64"/><rect x="113.3" y="77.9" width="0.8" height="0.6" fill="#e8f0e0" opacity="0.80"/><rect x="86.9" y="87.9" width="1.0" height="0.8" fill="#e8f0e0" opacity="0.99"/><rect x="68.1" y="70.0" width="1.0" height="0.8" fill="#e8f0e0" opacity="0.93"/><rect x="21.9" y="75.0" width="1.1" height="0.9" fill="#d8e4f8" opacity="0.74"/><rect x="44.0" y="92.0" width="1.4" height="1.2" fill="#e8f0e0" opacity="0.61"/><rect x="3.3" y="77.8" width="0.9" height="0.7" fill="#e8f0e0" opacity="0.57"/><rect x="18.8" y="66.1" width="1.1" height="0.9" fill="#e8f0e0" opacity="0.67"/><rect x="129.1" y="83.2" width="1.1" height="0.9" fill="#f0ecd8" opacity="0.93"/><rect x="99.6" y="61.5" width="1.2" height="0.9" fill="#e8f0e0" opacity="0.76"/><rect x="89.0" y="75.4" width="0.7" height="0.6" fill="#ffffff" opacity="0.61"/><rect x="39.0" y="79.9" width="0.9" height="0.7" fill="#b0c0d8" opacity="0.79"/><rect x="64.1" y="64.8" width="0.8" height="0.6" fill="#b0c0d8" opacity="0.55"/><rect x="76.3" y="79.0" width="1.4" height="1.1" fill="#ffffff" opacity="0.80"/><rect x="2.0" y="83.0" width="1.2" height="0.9" fill="#e8f0e0" opacity="0.86"/><rect x="131.6" y="77.4" width="1.1" height="0.9" fill="#e8f0e0" opacity="0.86"/><rect x="99.3" y="88.3" width="1.4" height="1.1" fill="#e8f0e0" opacity="0.58"/><rect x="115.4" y="79.4" width="1.2" height="0.9" fill="#e8f0e0" opacity="0.84"/><rect x="65.2" y="62.6" width="1.1" height="0.9" fill="#f0ecd8" opacity="0.80"/><rect x="68.7" y="63.5" width="1.0" height="0.8" fill="#f0ecd8" opacity="0.79"/><rect x="6.7" y="81.0" width="1.4" height="1.1" fill="#d8e4f8" opacity="0.91"/><rect x="99.7" y="91.8" width="1.3" height="1.0" fill="#e8f0e0" opacity="0.57"/><rect x="116.2" y="58.6" width="1.3" height="1.0" fill="#ffffff" opacity="0.61"/><rect x="40.4" y="89.1" width="0.8" height="0.7" fill="#f0ecd8" opacity="0.63"/><rect x="110.7" y="51.9" width="0.7" height="0.6" fill="#f0ecd8" opacity="0.60"/><rect x="52.3" y="52.1" width="1.2" height="0.9" fill="#ffffff" opacity="0.60"/><rect x="55.0" y="76.3" width="1.0" height="0.8" fill="#ffffff" opacity="0.69"/><rect x="82.8" y="70.4" width="1.4" height="1.1" fill="#d8e4f8" opacity="0.61"/><rect x="40.7" y="73.8" width="0.9" height="0.7" fill="#b0c0d8" opacity="0.97"/><rect x="75.9" y="58.6" width="1.1" height="0.9" fill="#ffffff" opacity="0.66"/><rect x="103.6" y="71.6" width="1.3" height="1.1" fill="#f0ecd8" opacity="0.94"/><rect x="62.6" y="66.0" width="1.3" height="1.0" fill="#f0ecd8" opacity="0.84"/><rect x="11.8" y="78.2" width="1.4" height="1.1" fill="#ffffff" opacity="0.78"/><rect x="62.6" y="66.0" width="1.1" height="0.9" fill="#e8f0e0" opacity="0.70"/><rect x="109.9" y="50.3" width="0.7" height="0.6" fill="#e8f0e0" opacity="0.62"/><rect x="131.4" y="78.8" width="1.3" height="1.0" fill="#f0ecd8" opacity="0.59"/><rect x="125.8" y="70.5" width="0.8" height="0.6" fill="#f0ecd8" opacity="0.83"/><rect x="48.9" y="59.3" width="1.4" height="1.2" fill="#d8e4f8" opacity="0.87"/><rect x="109.9" y="65.5" width="1.2" height="1.0" fill="#d8e4f8" opacity="0.91"/><rect x="59.8" y="86.2" width="0.7" height="0.6" fill="#b0c0d8" opacity="1.00"/><rect x="29.7" y="56.9" width="0.8" height="0.6" fill="#ffffff" opacity="0.56"/><rect x="122.7" y="70.0" width="0.7" height="0.6" fill="#d8e4f8" opacity="0.76"/><rect x="122.8" y="76.1" width="1.0" height="0.8" fill="#e8f0e0" opacity="0.76"/><rect x="26.4" y="77.6" width="1.0" height="0.8" fill="#ffffff" opacity="0.72"/><rect x="22.3" y="61.5" width="0.7" height="0.6" fill="#f0ecd8" opacity="0.95"/><rect x="47.5" y="81.9" width="1.5" height="1.2" fill="#d8e4f8" opacity="0.86"/><rect x="93.0" y="69.6" width="0.8" height="0.6" fill="#f0ecd8" opacity="0.85"/><rect x="40.2" y="78.5" width="0.7" height="0.6" fill="#f0ecd8" opacity="0.87"/><rect x="79.3" y="77.7" width="1.0" height="0.8" fill="#b0c0d8" opacity="0.99"/><rect x="50.3" y="62.6" width="1.0" height="0.8" fill="#e8f0e0" opacity="0.58"/><rect x="137.1" y="69.5" width="0.8" height="0.7" fill="#f0ecd8" opacity="0.64"/><rect x="6.1" y="75.6" width="0.7" height="0.6" fill="#d8e4f8" opacity="0.58"/><rect x="107.5" y="66.9" width="0.7" height="0.6" fill="#ffffff" opacity="0.93"/><rect x="115.5" y="73.7" width="1.3" height="1.0" fill="#ffffff" opacity="0.66"/><rect x="110.8" y="53.0" width="0.7" height="0.6" fill="#e8f0e0" opacity="0.66"/><rect x="7.0" y="66.4" width="0.7" height="0.6" fill="#ffffff" opacity="0.93"/><rect x="61.5" y="77.0" width="1.5" height="1.2" fill="#ffffff" opacity="0.64"/><rect x="96.0" y="77.0" width="1.1" height="0.9" fill="#f0ecd8" opacity="0.59"/><rect x="74.8" y="89.3" width="0.8" height="0.6" fill="#b0c0d8" opacity="0.88"/><rect x="86.2" y="68.3" width="1.1" height="0.9" fill="#d8e4f8" opacity="0.81"/><rect x="52.0" y="76.3" width="1.4" height="1.1" fill="#ffffff" opacity="0.69"/><rect x="62.0" y="85.1" width="1.1" height="0.9" fill="#f0ecd8" opacity="0.61"/><rect x="66.7" y="83.1" width="1.4" height="1.1" fill="#d8e4f8" opacity="0.69"/><rect x="59.2" y="74.2" width="0.9" height="0.7" fill="#f0ecd8" opacity="0.77"/><rect x="34.3" y="79.7" width="1.4" height="1.1" fill="#d8e4f8" opacity="0.95"/><rect x="9.9" y="82.6" width="1.3" height="1.0" fill="#e8f0e0" opacity="0.80"/><rect x="123.7" y="77.6" width="1.2" height="0.9" fill="#f0ecd8" opacity="0.75"/><rect x="112.7" y="77.6" width="1.3" height="1.0" fill="#ffffff" opacity="0.87"/><rect x="36.9" y="84.5" width="1.1" height="0.9" fill="#e8f0e0" opacity="0.69"/><rect x="42.3" y="55.0" width="1.2" height="1.0" fill="#e8f0e0" opacity="0.68"/><rect x="8.8" y="82.4" width="0.7" height="0.6" fill="#b0c0d8" opacity="0.60"/><rect x="133.8" y="85.1" width="1.4" height="1.1" fill="#e8f0e0" opacity="0.98"/><rect x="84.5" y="59.1" width="0.8" height="0.6" fill="#e8f0e0" opacity="0.64"/><rect x="49.4" y="56.1" width="1.4" height="1.1" fill="#b0c0d8" opacity="0.88"/><rect x="13.2" y="72.2" width="1.2" height="1.0" fill="#f0ecd8" opacity="0.61"/><rect x="105.5" y="68.0" width="0.8" height="0.6" fill="#e8f0e0" opacity="0.69"/><rect x="126.3" y="69.1" width="0.8" height="0.7" fill="#e8f0e0" opacity="0.57"/><rect x="92.2" y="56.0" width="1.5" height="1.2" fill="#e8f0e0" opacity="0.82"/><rect x="14.3" y="84.6" width="1.2" height="1.0" fill="#e8f0e0" opacity="0.64"/><rect x="0.1" y="88.7" width="1.1" height="0.9" fill="#f0ecd8" opacity="0.95"/><rect x="54.2" y="58.4" width="1.4" height="1.1" fill="#d8e4f8" opacity="0.69"/><rect x="71.2" y="82.4" width="1.0" height="0.8" fill="#f0ecd8" opacity="0.91"/><rect x="112.4" y="78.0" width="1.2" height="1.0" fill="#ffffff" opacity="0.73"/><rect x="19.7" y="85.3" width="1.0" height="0.8" fill="#e8f0e0" opacity="0.59"/><rect x="54.8" y="81.9" width="1.4" height="1.1" fill="#d8e4f8" opacity="0.64"/><rect x="110.0" y="63.2" width="1.4" height="1.1" fill="#e8f0e0" opacity="0.83"/><rect x="110.5" y="65.5" width="0.8" height="0.6" fill="#ffffff" opacity="0.82"/><rect x="85.7" y="84.5" width="1.0" height="0.8" fill="#ffffff" opacity="0.56"/><rect x="43.1" y="65.7" width="1.1" height="0.9" fill="#e8f0e0" opacity="0.86"/><rect x="62.1" y="83.4" width="1.4" height="1.2" fill="#b0c0d8" opacity="0.86"/><rect x="92.5" y="72.5" width="1.0" height="0.8" fill="#e8f0e0" opacity="0.82"/><rect x="93.8" y="71.8" width="0.9" height="0.7" fill="#d8e4f8" opacity="0.56"/><rect x="106.8" y="75.7" width="0.9" height="0.8" fill="#e8f0e0" opacity="0.97"/><rect x="37.9" y="80.3" width="0.7" height="0.6" fill="#ffffff" opacity="0.59"/><rect x="132.7" y="62.1" width="1.3" height="1.0" fill="#d8e4f8" opacity="0.93"/><rect x="101.9" y="75.7" width="1.1" height="0.9" fill="#f0ecd8" opacity="0.59"/><rect x="16.7" y="63.9" width="1.0" height="0.8" fill="#b0c0d8" opacity="0.99"/><rect x="92.6" y="65.5" width="1.4" height="1.1" fill="#b0c0d8" opacity="0.96"/><rect x="84.7" y="65.9" width="1.4" height="1.1" fill="#ffffff" opacity="0.95"/><rect x="95.0" y="92.0" width="1.4" height="1.1" fill="#f0ecd8" opacity="0.65"/><rect x="42.2" y="60.7" width="0.8" height="0.6" fill="#b0c0d8" opacity="0.98"/><rect x="10.6" y="67.0" width="0.9" height="0.7" fill="#f0ecd8" opacity="0.58"/><rect x="78.1" y="85.3" width="1.3" height="1.0" fill="#b0c0d8" opacity="0.74"/><rect x="58.7" y="72.1" width="0.9" height="0.8" fill="#f0ecd8" opacity="0.68"/><rect x="83.5" y="91.2" width="1.0" height="0.8" fill="#f0ecd8" opacity="0.62"/><rect x="40.8" y="73.3" width="0.8" height="0.7" fill="#b0c0d8" opacity="0.64"/><rect x="82.0" y="77.2" width="1.3" height="1.0" fill="#d8e4f8" opacity="0.58"/><rect x="66.9" y="85.5" width="1.0" height="0.8" fill="#ffffff" opacity="0.93"/><rect x="89.0" y="89.5" width="1.4" height="1.1" fill="#f0ecd8" opacity="0.83"/><rect x="110.1" y="85.7" width="0.9" height="0.7" fill="#ffffff" opacity="0.62"/><rect x="104.6" y="81.2" width="1.3" height="1.0" fill="#f0ecd8" opacity="0.97"/><rect x="132.1" y="76.3" width="1.0" height="0.8" fill="#ffffff" opacity="0.92"/><rect x="27.0" y="63.2" width="1.1" height="0.9" fill="#f0ecd8" opacity="0.86"/><rect x="55.6" y="72.7" width="0.7" height="0.6" fill="#e8f0e0" opacity="0.99"/><rect x="0.5" y="65.7" width="1.5" height="1.2" fill="#d8e4f8" opacity="0.58"/><rect x="104.9" y="80.5" width="0.7" height="0.6" fill="#d8e4f8" opacity="0.91"/><rect x="137.9" y="81.8" width="1.4" height="1.1" fill="#f0ecd8" opacity="0.72"/><rect x="40.1" y="70.8" width="1.2" height="0.9" fill="#ffffff" opacity="0.68"/><rect x="46.5" y="86.1" width="1.0" height="0.8" fill="#b0c0d8" opacity="0.65"/><rect x="136.1" y="60.8" width="0.8" height="0.7" fill="#ffffff" opacity="0.99"/><rect x="76.4" y="67.9" width="1.1" height="0.9" fill="#f0ecd8" opacity="0.72"/><rect x="49.1" y="84.4" width="1.4" height="1.1" fill="#ffffff" opacity="0.61"/><rect x="111.9" y="49.9" width="1.1" height="0.9" fill="#b0c0d8" opacity="0.72"/><rect x="71.3" y="51.3" width="0.9" height="0.7" fill="#f0ecd8" opacity="0.91"/><rect x="1.7" y="71.7" width="1.2" height="0.9" fill="#d8e4f8" opacity="0.93"/><rect x="22.1" y="82.7" width="1.0" height="0.8" fill="#b0c0d8" opacity="0.82"/><rect x="124.5" y="77.2" width="0.7" height="0.6" fill="#b0c0d8" opacity="0.56"/><rect x="106.2" y="67.1" width="1.4" height="1.1" fill="#e8f0e0" opacity="0.72"/><rect x="137.9" y="82.0" width="0.8" height="0.7" fill="#d8e4f8" opacity="0.90"/><rect x="58.3" y="91.5" width="0.9" height="0.7" fill="#d8e4f8" opacity="0.74"/><rect x="37.4" y="69.5" width="0.7" height="0.6" fill="#d8e4f8" opacity="0.84"/><rect x="106.2" y="82.1" width="0.8" height="0.6" fill="#ffffff" opacity="0.72"/><rect x="123.8" y="87.7" width="1.2" height="1.0" fill="#f0ecd8" opacity="0.89"/><rect x="68.1" y="62.9" width="0.8" height="0.6" fill="#e8f0e0" opacity="0.66"/><rect x="127.0" y="90.0" width="0.7" height="0.6" fill="#ffffff" opacity="0.92"/><rect x="90.2" y="63.6" width="0.8" height="0.7" fill="#f0ecd8" opacity="0.78"/><rect x="134.5" y="79.7" width="0.9" height="0.7" fill="#ffffff" opacity="0.60"/><rect x="55.1" y="62.3" width="1.1" height="0.9" fill="#e8f0e0" opacity="0.75"/><rect x="120.2" y="91.2" width="0.9" height="0.7" fill="#f0ecd8" opacity="0.80"/><rect x="100.9" y="54.8" width="1.2" height="1.0" fill="#e8f0e0" opacity="0.58"/><rect x="32.1" y="80.3" width="1.3" height="1.1" fill="#f0ecd8" opacity="0.58"/><rect x="53.2" y="64.1" width="1.1" height="0.9" fill="#ffffff" opacity="0.75"/><rect x="125.1" y="73.9" width="1.3" height="1.0" fill="#d8e4f8" opacity="0.97"/><rect x="131.1" y="92.2" width="1.4" height="1.1" fill="#d8e4f8" opacity="0.82"/><rect x="94.2" y="77.2" width="1.3" height="1.0" fill="#ffffff" opacity="0.79"/><rect x="53.6" y="89.4" width="1.4" height="1.1" fill="#d8e4f8" opacity="0.72"/><rect x="56.4" y="68.9" width="1.1" height="0.9" fill="#ffffff" opacity="0.80"/><rect x="28.6" y="68.8" width="1.3" height="1.0" fill="#ffffff" opacity="0.60"/><rect x="122.2" y="65.4" width="0.9" height="0.7" fill="#d8e4f8" opacity="0.67"/><rect x="108.1" y="81.4" width="0.9" height="0.7" fill="#d8e4f8" opacity="0.56"/><rect x="34.8" y="56.3" width="1.3" height="1.0" fill="#f0ecd8" opacity="0.82"/><rect x="120.8" y="89.0" width="1.2" height="0.9" fill="#f0ecd8" opacity="0.80"/><rect x="124.4" y="64.5" width="0.7" height="0.6" fill="#ffffff" opacity="0.57"/><rect x="113.7" y="70.6" width="0.7" height="0.6" fill="#ffffff" opacity="0.74"/><rect x="56.9" y="72.2" width="1.2" height="1.0" fill="#e8f0e0" opacity="0.65"/><rect x="8.8" y="78.9" width="0.7" height="0.6" fill="#ffffff" opacity="0.87"/><rect x="41.9" y="71.9" width="1.3" height="1.0" fill="#b0c0d8" opacity="0.58"/><rect x="88.8" y="85.9" width="1.0" height="0.8" fill="#ffffff" opacity="0.69"/><rect x="62.6" y="62.1" width="1.1" height="0.9" fill="#d8e4f8" opacity="0.96"/><rect x="29.9" y="60.5" width="0.9" height="0.7" fill="#b0c0d8" opacity="0.59"/><rect x="58.7" y="76.2" width="0.8" height="0.7" fill="#e8f0e0" opacity="0.61"/><rect x="67.8" y="79.0" width="1.4" height="1.2" fill="#e8f0e0" opacity="0.70"/><rect x="2.4" y="68.0" width="1.1" height="0.9" fill="#b0c0d8" opacity="0.79"/><rect x="124.2" y="73.3" width="1.0" height="0.8" fill="#f0ecd8" opacity="0.90"/><rect x="115.4" y="61.8" width="0.9" height="0.7" fill="#ffffff" opacity="0.74"/><rect x="116.8" y="71.6" width="1.2" height="1.0" fill="#e8f0e0" opacity="0.84"/><rect x="106.2" y="63.7" width="1.4" height="1.1" fill="#ffffff" opacity="0.68"/><rect x="104.3" y="56.8" width="1.0" height="0.8" fill="#b0c0d8" opacity="0.84"/><rect x="99.9" y="60.4" width="1.4" height="1.1" fill="#e8f0e0" opacity="0.95"/><rect x="43.0" y="61.8" width="1.0" height="0.8" fill="#d8e4f8" opacity="0.94"/><rect x="8.7" y="62.2" width="0.7" height="0.6" fill="#f0ecd8" opacity="0.59"/><rect x="101.7" y="90.9" width="0.8" height="0.6" fill="#e8f0e0" opacity="0.74"/><rect x="78.0" y="61.7" width="1.2" height="1.0" fill="#ffffff" opacity="0.70"/><rect x="52.5" y="56.4" width="0.8" height="0.6" fill="#f0ecd8" opacity="0.79"/><rect x="11.6" y="92.1" width="1.0" height="0.8" fill="#b0c0d8" opacity="0.60"/><rect x="42.3" y="68.8" width="0.7" height="0.6" fill="#e8f0e0" opacity="0.95"/><rect x="90.6" y="56.9" width="1.0" height="0.8" fill="#f0ecd8" opacity="0.91"/><rect x="73.0" y="55.1" width="1.4" height="1.1" fill="#ffffff" opacity="0.84"/><rect x="42.3" y="73.2" width="1.2" height="1.0" fill="#b0c0d8" opacity="0.67"/><rect x="22.9" y="76.5" width="1.1" height="0.9" fill="#e8f0e0" opacity="0.89"/><rect x="28.0" y="79.4" width="1.1" height="0.8" fill="#ffffff" opacity="0.66"/><rect x="34.5" y="77.1" width="0.9" height="0.7" fill="#e8f0e0" opacity="0.76"/><rect x="93.4" y="84.0" width="0.8" height="0.6" fill="#e8f0e0" opacity="0.81"/><rect x="34.8" y="64.6" width="1.1" height="0.9" fill="#ffffff" opacity="0.80"/><rect x="79.7" y="70.0" width="1.4" height="1.1" fill="#e8f0e0" opacity="0.78"/><rect x="83.3" y="75.5" width="1.4" height="1.1" fill="#ffffff" opacity="0.61"/><rect x="58.0" y="67.1" width="0.9" height="0.7" fill="#f0ecd8" opacity="0.64"/><rect x="133.0" y="67.2" width="1.0" height="0.8" fill="#d8e4f8" opacity="0.93"/><rect x="93.3" y="63.9" width="1.1" height="0.9" fill="#b0c0d8" opacity="0.87"/><rect x="84.8" y="83.8" width="1.2" height="0.9" fill="#f0ecd8" opacity="0.84"/><rect x="74.4" y="70.1" width="1.4" height="1.1" fill="#e8f0e0" opacity="0.57"/><rect x="73.9" y="69.9" width="1.3" height="1.0" fill="#ffffff" opacity="0.63"/><rect x="23.6" y="71.2" width="1.2" height="1.0" fill="#e8f0e0" opacity="0.72"/><rect x="89.0" y="59.0" width="1.4" height="1.1" fill="#d8e4f8" opacity="0.64"/><rect x="128.5" y="65.3" width="0.9" height="0.8" fill="#b0c0d8" opacity="0.88"/><rect x="51.4" y="75.1" width="1.3" height="1.1" fill="#e8f0e0" opacity="0.88"/><rect x="123.1" y="72.2" width="0.8" height="0.7" fill="#ffffff" opacity="0.58"/><rect x="2.0" y="82.5" width="0.8" height="0.7" fill="#ffffff" opacity="0.95"/><rect x="124.0" y="69.5" width="1.1" height="0.9" fill="#d8e4f8" opacity="0.56"/><rect x="109.7" y="82.5" width="1.1" height="0.9" fill="#b0c0d8" opacity="0.83"/><rect x="83.4" y="88.7" width="0.9" height="0.7" fill="#b0c0d8" opacity="0.84"/><rect x="61.3" y="71.0" width="1.3" height="1.0" fill="#ffffff" opacity="0.64"/><rect x="73.7" y="87.8" width="0.9" height="0.7" fill="#f0ecd8" opacity="0.55"/><rect x="59.2" y="62.1" width="1.0" height="0.8" fill="#e8f0e0" opacity="0.90"/><rect x="15.8" y="65.8" width="0.9" height="0.7" fill="#f0ecd8" opacity="0.73"/><rect x="62.2" y="66.9" width="0.9" height="0.7" fill="#ffffff" opacity="0.79"/><rect x="27.8" y="79.0" width="1.3" height="1.0" fill="#d8e4f8" opacity="0.94"/><rect x="126.6" y="83.7" width="1.4" height="1.1" fill="#e8f0e0" opacity="0.95"/><rect x="77.4" y="85.1" width="1.3" height="1.0" fill="#e8f0e0" opacity="0.64"/><rect x="80.3" y="80.3" width="0.9" height="0.7" fill="#ffffff" opacity="0.79"/><rect x="116.0" y="65.0" width="1.3" height="1.0" fill="#ffffff" opacity="0.74"/><rect x="112.5" y="76.4" width="0.7" height="0.6" fill="#f0ecd8" opacity="0.62"/><rect x="58.7" y="53.6" width="1.3" height="1.0" fill="#ffffff" opacity="0.76"/><rect x="114.4" y="88.3" width="1.1" height="0.9" fill="#ffffff" opacity="0.72"/><rect x="136.4" y="80.6" width="1.3" height="1.0" fill="#d8e4f8" opacity="0.76"/><rect x="110.9" y="68.7" width="1.2" height="0.9" fill="#d8e4f8" opacity="0.79"/><rect x="23.6" y="67.6" width="1.5" height="1.2" fill="#e8f0e0" opacity="0.56"/><rect x="70.9" y="82.9" width="0.9" height="0.7" fill="#e8f0e0" opacity="0.85"/><rect x="82.0" y="53.1" width="1.0" height="0.8" fill="#d8e4f8" opacity="0.69"/><rect x="118.2" y="83.0" width="1.2" height="1.0" fill="#d8e4f8" opacity="0.90"/><rect x="127.9" y="87.9" width="0.7" height="0.6" fill="#ffffff" opacity="0.78"/><rect x="64.8" y="68.4" width="1.0" height="0.8" fill="#f0ecd8" opacity="0.83"/><rect x="79.0" y="91.4" width="0.9" height="0.7" fill="#b0c0d8" opacity="0.68"/><rect x="12.5" y="62.2" width="0.9" height="0.7" fill="#e8f0e0" opacity="0.59"/><rect x="47.7" y="90.3" width="1.5" height="1.2" fill="#ffffff" opacity="0.94"/><rect x="44.9" y="85.3" width="1.0" height="0.8" fill="#e8f0e0" opacity="0.86"/><rect x="62.5" y="87.1" width="1.2" height="0.9" fill="#ffffff" opacity="0.95"/><rect x="42.7" y="69.1" width="1.1" height="0.9" fill="#b0c0d8" opacity="0.78"/><rect x="12.9" y="71.3" width="1.0" height="0.8" fill="#e8f0e0" opacity="0.64"/><rect x="100.5" y="89.8" width="0.8" height="0.6" fill="#ffffff" opacity="0.75"/><rect x="121.3" y="62.4" width="1.0" height="0.8" fill="#d8e4f8" opacity="0.97"/><rect x="19.8" y="62.3" width="0.8" height="0.6" fill="#b0c0d8" opacity="0.89"/><rect x="11.2" y="76.4" width="1.0" height="0.8" fill="#d8e4f8" opacity="0.65"/><rect x="59.8" y="62.0" width="1.1" height="0.9" fill="#d8e4f8" opacity="1.00"/><rect x="77.8" y="66.3" width="1.2" height="1.0" fill="#e8f0e0" opacity="0.93"/><rect x="24.5" y="69.7" width="1.4" height="1.1" fill="#d8e4f8" opacity="0.59"/><rect x="60.4" y="60.9" width="1.5" height="1.2" fill="#d8e4f8" opacity="0.97"/><rect x="53.8" y="86.4" width="0.8" height="0.6" fill="#d8e4f8" opacity="0.89"/><rect x="100.4" y="69.0" width="0.8" height="0.7" fill="#d8e4f8" opacity="0.99"/><rect x="1.3" y="78.9" width="0.9" height="0.7" fill="#d8e4f8" opacity="0.83"/><rect x="60.4" y="75.8" width="0.8" height="0.6" fill="#e8f0e0" opacity="0.72"/><rect x="56.0" y="79.2" width="1.2" height="1.0" fill="#b0c0d8" opacity="0.56"/><rect x="15.6" y="73.2" width="1.0" height="0.8" fill="#ffffff" opacity="0.83"/><rect x="22.4" y="89.8" width="0.9" height="0.7" fill="#ffffff" opacity="0.56"/><rect x="127.1" y="92.4" width="1.3" height="1.1" fill="#d8e4f8" opacity="0.65"/><rect x="135.8" y="62.6" width="1.4" height="1.1" fill="#f0ecd8" opacity="0.84"/><rect x="106.6" y="88.1" width="1.4" height="1.1" fill="#b0c0d8" opacity="0.93"/><rect x="108.0" y="60.1" width="1.3" height="1.1" fill="#f0ecd8" opacity="0.69"/><rect x="54.0" y="59.5" width="1.4" height="1.1" fill="#e8f0e0" opacity="0.90"/><rect x="7.6" y="81.6" width="0.9" height="0.7" fill="#b0c0d8" opacity="0.85"/><rect x="13.4" y="70.2" width="0.7" height="0.6" fill="#d8e4f8" opacity="0.62"/><rect x="102.3" y="89.4" width="1.0" height="0.8" fill="#d8e4f8" opacity="0.98"/><rect x="67.2" y="85.6" width="1.2" height="0.9" fill="#ffffff" opacity="0.69"/><rect x="54.2" y="62.9" width="1.4" height="1.1" fill="#f0ecd8" opacity="0.91"/><rect x="40.7" y="55.5" width="1.2" height="0.9" fill="#ffffff" opacity="0.64"/><rect x="125.6" y="73.7" width="0.9" height="0.7" fill="#ffffff" opacity="0.64"/><rect x="91.7" y="74.5" width="1.4" height="1.1" fill="#d8e4f8" opacity="0.61"/><rect x="104.8" y="56.4" width="1.2" height="0.9" fill="#b0c0d8" opacity="0.87"/><rect x="101.1" y="70.3" width="1.2" height="1.0" fill="#e8f0e0" opacity="0.86"/><rect x="64.3" y="72.8" width="1.2" height="1.0" fill="#ffffff" opacity="0.84"/><rect x="78.3" y="90.3" width="0.9" height="0.8" fill="#ffffff" opacity="0.80"/><rect x="83.6" y="77.6" width="1.0" height="0.8" fill="#d8e4f8" opacity="0.93"/><rect x="117.6" y="75.5" width="0.8" height="0.6" fill="#d8e4f8" opacity="0.75"/><rect x="77.3" y="57.5" width="1.2" height="1.0" fill="#ffffff" opacity="0.93"/><rect x="75.4" y="57.7" width="0.9" height="0.7" fill="#f0ecd8" opacity="0.92"/><rect x="37.3" y="77.0" width="1.3" height="1.0" fill="#d8e4f8" opacity="0.83"/><rect x="38.8" y="88.1" width="1.3" height="1.1" fill="#e8f0e0" opacity="0.58"/><rect x="54.5" y="91.8" width="1.2" height="1.0" fill="#e8f0e0" opacity="0.87"/><rect x="65.9" y="72.5" width="1.2" height="1.0" fill="#e8f0e0" opacity="0.57"/><rect x="69.7" y="77.9" width="1.1" height="0.9" fill="#d8e4f8" opacity="0.63"/><rect x="59.5" y="84.3" width="1.4" height="1.2" fill="#f0ecd8" opacity="0.87"/><rect x="97.9" y="79.8" width="1.2" height="0.9" fill="#f0ecd8" opacity="0.90"/><rect x="91.1" y="61.4" width="1.0" height="0.8" fill="#f0ecd8" opacity="0.77"/><rect x="117.3" y="56.7" width="1.1" height="0.9" fill="#e8f0e0" opacity="0.77"/><rect x="87.1" y="59.4" width="1.0" height="0.8" fill="#f0ecd8" opacity="0.87"/><rect x="107.3" y="77.5" width="1.2" height="1.0" fill="#b0c0d8" opacity="0.56"/><rect x="96.3" y="78.7" width="1.5" height="1.2" fill="#f0ecd8" opacity="0.91"/><rect x="58.8" y="88.9" width="1.3" height="1.0" fill="#ffffff" opacity="0.70"/><rect x="106.2" y="72.2" width="1.2" height="1.0" fill="#b0c0d8" opacity="0.94"/><rect x="98.6" y="91.4" width="1.1" height="0.9" fill="#e8f0e0" opacity="0.93"/><rect x="123.3" y="63.1" width="1.0" height="0.8" fill="#b0c0d8" opacity="0.77"/><rect x="128.2" y="61.1" width="0.9" height="0.7" fill="#d8e4f8" opacity="0.85"/><rect x="61.2" y="51.9" width="1.4" height="1.1" fill="#e8f0e0" opacity="0.76"/><rect x="45.4" y="60.3" width="1.0" height="0.8" fill="#d8e4f8" opacity="0.69"/><rect x="109.2" y="59.4" width="1.3" height="1.1" fill="#d8e4f8" opacity="0.97"/><rect x="48.9" y="59.9" width="0.8" height="0.6" fill="#d8e4f8" opacity="0.80"/><rect x="34.9" y="72.2" width="0.7" height="0.6" fill="#d8e4f8" opacity="0.85"/><rect x="41.5" y="55.4" width="1.0" height="0.8" fill="#f0ecd8" opacity="0.98"/><rect x="6.0" y="88.1" width="1.0" height="0.8" fill="#e8f0e0" opacity="0.60"/><rect x="115.2" y="72.0" width="1.3" height="1.0" fill="#e8f0e0" opacity="0.91"/><rect x="0.9" y="62.4" width="0.8" height="0.6" fill="#e8f0e0" opacity="0.87"/><rect x="86.7" y="64.9" width="1.4" height="1.1" fill="#b0c0d8" opacity="0.68"/><rect x="60.3" y="91.1" width="1.1" height="0.9" fill="#ffffff" opacity="0.69"/><rect x="130.8" y="69.8" width="1.1" height="0.9" fill="#d8e4f8" opacity="0.58"/><rect x="80.5" y="77.0" width="1.2" height="1.0" fill="#b0c0d8" opacity="0.79"/><rect x="92.9" y="78.4" width="1.1" height="0.9" fill="#b0c0d8" opacity="0.64"/><rect x="85.2" y="67.1" width="1.0" height="0.8" fill="#e8f0e0" opacity="0.66"/><rect x="43.3" y="70.5" width="0.9" height="0.7" fill="#f0ecd8" opacity="0.77"/><rect x="34.9" y="60.6" width="1.4" height="1.1" fill="#b0c0d8" opacity="0.81"/><rect x="40.2" y="80.2" width="1.2" height="1.0" fill="#ffffff" opacity="0.76"/><rect x="32.1" y="71.6" width="0.8" height="0.7" fill="#b0c0d8" opacity="0.71"/><rect x="94.7" y="82.9" width="0.8" height="0.7" fill="#e8f0e0" opacity="0.75"/><rect x="123.6" y="88.4" width="1.2" height="0.9" fill="#e8f0e0" opacity="0.94"/><rect x="61.4" y="56.1" width="1.1" height="0.9" fill="#d8e4f8" opacity="0.95"/><rect x="41.0" y="91.8" width="1.2" height="1.0" fill="#d8e4f8" opacity="0.71"/><rect x="83.8" y="91.9" width="0.8" height="0.6" fill="#f0ecd8" opacity="0.68"/><rect x="90.5" y="88.7" width="0.7" height="0.6" fill="#b0c0d8" opacity="0.71"/><rect x="47.6" y="56.5" width="1.0" height="0.8" fill="#f0ecd8" opacity="0.73"/><rect x="83.3" y="67.4" width="1.2" height="0.9" fill="#f0ecd8" opacity="0.89"/><rect x="27.1" y="81.3" width="1.2" height="1.0" fill="#b0c0d8" opacity="0.76"/><rect x="99.7" y="67.7" width="1.0" height="0.8" fill="#f0ecd8" opacity="0.73"/><rect x="77.8" y="65.5" width="1.5" height="1.2" fill="#d8e4f8" opacity="0.71"/><rect x="56.9" y="61.2" width="1.1" height="0.9" fill="#d8e4f8" opacity="0.63"/><rect x="122.0" y="89.6" width="1.3" height="1.0" fill="#ffffff" opacity="0.70"/><rect x="12.0" y="70.7" width="0.8" height="0.6" fill="#d8e4f8" opacity="0.62"/><rect x="45.3" y="79.5" width="1.1" height="0.9" fill="#f0ecd8" opacity="0.98"/><rect x="60.5" y="83.6" width="1.4" height="1.1" fill="#b0c0d8" opacity="0.56"/><rect x="110.3" y="75.1" width="1.0" height="0.8" fill="#ffffff" opacity="0.62"/><rect x="2.9" y="79.0" width="1.3" height="1.0" fill="#d8e4f8" opacity="0.90"/><rect x="117.0" y="86.8" width="1.0" height="0.8" fill="#b0c0d8" opacity="0.75"/><rect x="93.3" y="88.7" width="0.9" height="0.7" fill="#b0c0d8" opacity="1.00"/><rect x="25.3" y="74.4" width="0.9" height="0.7" fill="#d8e4f8" opacity="0.95"/><rect x="84.2" y="80.0" width="1.2" height="0.9" fill="#f0ecd8" opacity="0.77"/><rect x="137.5" y="66.4" width="1.0" height="0.8" fill="#e8f0e0" opacity="0.67"/><rect x="45.6" y="91.7" width="1.1" height="0.9" fill="#e8f0e0" opacity="0.80"/><rect x="90.5" y="60.5" width="1.3" height="1.1" fill="#ffffff" opacity="0.59"/><rect x="14.4" y="66.8" width="0.8" height="0.6" fill="#b0c0d8" opacity="0.71"/><rect x="18.5" y="87.4" width="1.1" height="0.9" fill="#ffffff" opacity="0.72"/><rect x="104.9" y="74.1" width="1.4" height="1.1" fill="#ffffff" opacity="1.00"/><rect x="108.8" y="76.5" width="1.2" height="0.9" fill="#f0ecd8" opacity="0.81"/><rect x="100.9" y="64.3" width="1.2" height="1.0" fill="#f0ecd8" opacity="0.82"/><rect x="15.1" y="68.6" width="0.9" height="0.7" fill="#ffffff" opacity="0.85"/><rect x="96.1" y="60.9" width="0.8" height="0.6" fill="#ffffff" opacity="0.78"/><rect x="28.9" y="75.4" width="1.2" height="0.9" fill="#f0ecd8" opacity="0.95"/><rect x="69.6" y="70.7" width="0.9" height="0.7" fill="#ffffff" opacity="0.80"/><rect x="83.8" y="88.7" width="1.4" height="1.1" fill="#b0c0d8" opacity="0.56"/><rect x="19.2" y="86.7" width="0.8" height="0.6" fill="#d8e4f8" opacity="0.56"/><rect x="103.9" y="67.2" width="1.2" height="0.9" fill="#d8e4f8" opacity="0.76"/><rect x="66.2" y="67.4" width="1.0" height="0.8" fill="#f0ecd8" opacity="0.71"/><rect x="103.7" y="78.7" width="0.8" height="0.6" fill="#e8f0e0" opacity="0.88"/><rect x="130.2" y="81.3" width="0.9" height="0.7" fill="#ffffff" opacity="0.91"/><rect x="73.6" y="89.9" width="1.0" height="0.8" fill="#d8e4f8" opacity="0.95"/><rect x="92.7" y="71.5" width="0.9" height="0.7" fill="#ffffff" opacity="0.98"/><rect x="68.8" y="82.0" width="1.0" height="0.8" fill="#d8e4f8" opacity="0.82"/><rect x="26.4" y="92.7" width="1.4" height="1.1" fill="#ffffff" opacity="0.95"/><rect x="100.8" y="88.6" width="1.0" height="0.8" fill="#b0c0d8" opacity="0.94"/><rect x="44.3" y="54.5" width="0.8" height="0.7" fill="#b0c0d8" opacity="0.64"/><rect x="0.2" y="65.3" width="1.1" height="0.9" fill="#d8e4f8" opacity="0.77"/><rect x="62.4" y="52.4" width="0.8" height="0.7" fill="#d8e4f8" opacity="0.91"/><rect x="5.8" y="87.7" width="1.2" height="1.0" fill="#ffffff" opacity="0.80"/><rect x="15.7" y="86.8" width="1.1" height="0.9" fill="#ffffff" opacity="0.66"/><rect x="32.7" y="64.4" width="1.3" height="1.0" fill="#ffffff" opacity="0.87"/><rect x="50.3" y="89.9" width="1.2" height="0.9" fill="#e8f0e0" opacity="0.66"/><rect x="26.6" y="89.8" width="0.8" height="0.6" fill="#f0ecd8" opacity="0.82"/><rect x="121.1" y="89.7" width="0.9" height="0.7" fill="#e8f0e0" opacity="0.65"/><rect x="75.3" y="67.7" width="0.8" height="0.7" fill="#f0ecd8" opacity="0.96"/><rect x="36.1" y="64.0" width="1.3" height="1.0" fill="#ffffff" opacity="0.67"/><rect x="27.8" y="77.4" width="1.5" height="1.2" fill="#b0c0d8" opacity="0.86"/><rect x="25.4" y="67.9" width="1.1" height="0.9" fill="#f0ecd8" opacity="0.91"/><rect x="7.6" y="91.4" width="1.1" height="0.9" fill="#b0c0d8" opacity="1.00"/><rect x="110.4" y="91.5" width="1.5" height="1.2" fill="#e8f0e0" opacity="0.60"/><rect x="17.3" y="81.3" width="0.9" height="0.7" fill="#d8e4f8" opacity="0.94"/><rect x="130.5" y="89.6" width="1.2" height="1.0" fill="#f0ecd8" opacity="0.94"/><rect x="107.7" y="59.2" width="1.1" height="0.9" fill="#f0ecd8" opacity="0.67"/><rect x="104.5" y="65.1" width="1.3" height="1.0" fill="#f0ecd8" opacity="0.74"/><rect x="57.6" y="65.2" width="1.4" height="1.1" fill="#b0c0d8" opacity="0.87"/><rect x="101.2" y="74.2" width="1.3" height="1.0" fill="#d8e4f8" opacity="0.86"/><rect x="83.2" y="92.7" width="1.3" height="1.0" fill="#e8f0e0" opacity="0.72"/><rect x="106.2" y="52.5" width="1.4" height="1.1" fill="#d8e4f8" opacity="0.81"/><rect x="113.9" y="58.3" width="1.5" height="1.2" fill="#e8f0e0" opacity="0.98"/><rect x="46.8" y="85.1" width="1.5" height="1.2" fill="#b0c0d8" opacity="0.64"/><rect x="133.2" y="82.9" width="0.8" height="0.7" fill="#d8e4f8" opacity="0.89"/><rect x="115.0" y="77.4" width="1.3" height="1.0" fill="#d8e4f8" opacity="0.88"/><rect x="36.9" y="67.5" width="0.9" height="0.7" fill="#e8f0e0" opacity="0.99"/><rect x="61.1" y="59.7" width="0.8" height="0.6" fill="#ffffff" opacity="0.99"/><rect x="50.8" y="85.5" width="0.9" height="0.7" fill="#b0c0d8" opacity="0.72"/><rect x="63.3" y="67.4" width="1.2" height="0.9" fill="#e8f0e0" opacity="0.68"/><rect x="47.5" y="71.2" width="1.2" height="1.0" fill="#f0ecd8" opacity="0.92"/><rect x="94.8" y="76.6" width="1.4" height="1.1" fill="#b0c0d8" opacity="0.82"/><rect x="53.1" y="73.5" width="0.9" height="0.7" fill="#b0c0d8" opacity="0.56"/><rect x="90.2" y="71.3" width="1.1" height="0.8" fill="#ffffff" opacity="0.93"/><rect x="88.5" y="63.4" width="1.4" height="1.2" fill="#f0ecd8" opacity="0.75"/><rect x="13.8" y="82.8" width="1.4" height="1.1" fill="#d8e4f8" opacity="0.72"/><rect x="74.2" y="73.6" width="0.9" height="0.7" fill="#d8e4f8" opacity="0.66"/><rect x="67.8" y="68.7" width="1.5" height="1.2" fill="#f0ecd8" opacity="0.74"/><rect x="72.7" y="86.9" width="1.3" height="1.0" fill="#f0ecd8" opacity="0.72"/><rect x="26.9" y="82.9" width="1.4" height="1.1" fill="#f0ecd8" opacity="0.99"/><rect x="86.1" y="91.8" width="1.4" height="1.1" fill="#b0c0d8" opacity="0.85"/><rect x="18.2" y="68.3" width="1.4" height="1.1" fill="#f0ecd8" opacity="0.87"/><rect x="62.8" y="63.6" width="0.8" height="0.6" fill="#f0ecd8" opacity="0.87"/><rect x="136.5" y="83.2" width="0.9" height="0.7" fill="#e8f0e0" opacity="0.86"/><rect x="49.2" y="69.1" width="0.8" height="0.7" fill="#b0c0d8" opacity="0.98"/><rect x="97.9" y="89.9" width="0.8" height="0.6" fill="#f0ecd8" opacity="0.59"/><rect x="35.9" y="86.8" width="0.9" height="0.7" fill="#f0ecd8" opacity="0.89"/><rect x="107.8" y="80.7" width="1.4" height="1.1" fill="#e8f0e0" opacity="0.58"/><rect x="117.4" y="62.4" width="1.1" height="0.9" fill="#f0ecd8" opacity="0.98"/><rect x="110.6" y="54.9" width="1.0" height="0.8" fill="#d8e4f8" opacity="0.95"/><rect x="86.3" y="65.6" width="0.8" height="0.6" fill="#e8f0e0" opacity="0.80"/><rect x="83.0" y="84.9" width="0.9" height="0.7" fill="#e8f0e0" opacity="0.91"/><rect x="54.1" y="57.0" width="1.2" height="0.9" fill="#d8e4f8" opacity="0.65"/><rect x="123.3" y="70.5" width="1.5" height="1.2" fill="#ffffff" opacity="0.70"/><rect x="75.0" y="72.9" width="0.8" height="0.7" fill="#d8e4f8" opacity="0.67"/><rect x="100.7" y="64.6" width="1.2" height="1.0" fill="#d8e4f8" opacity="0.83"/><rect x="50.9" y="78.3" width="0.8" height="0.6" fill="#e8f0e0" opacity="0.85"/><rect x="79.7" y="87.2" width="0.7" height="0.6" fill="#f0ecd8" opacity="0.69"/><rect x="19.2" y="91.6" width="1.0" height="0.8" fill="#d8e4f8" opacity="0.66"/><rect x="121.7" y="86.2" width="1.2" height="0.9" fill="#f0ecd8" opacity="0.98"/><rect x="136.4" y="72.0" width="1.2" height="1.0" fill="#e8f0e0" opacity="0.91"/><rect x="98.2" y="71.2" width="1.4" height="1.1" fill="#e8f0e0" opacity="0.98"/><rect x="92.5" y="61.0" width="1.0" height="0.8" fill="#b0c0d8" opacity="0.94"/><rect x="58.5" y="79.2" width="1.3" height="1.0" fill="#ffffff" opacity="0.89"/><rect x="47.2" y="55.6" width="1.0" height="0.8" fill="#d8e4f8" opacity="0.94"/><rect x="23.5" y="90.2" width="0.8" height="0.6" fill="#e8f0e0" opacity="0.56"/><rect x="79.9" y="52.6" width="1.0" height="0.8" fill="#ffffff" opacity="0.88"/><rect x="62.5" y="77.2" width="1.2" height="0.9" fill="#b0c0d8" opacity="0.73"/><rect x="125.2" y="84.4" width="1.3" height="1.0" fill="#d8e4f8" opacity="0.59"/><rect x="28.0" y="83.2" width="1.0" height="0.8" fill="#b0c0d8" opacity="0.56"/><rect x="28.8" y="73.9" width="0.9" height="0.7" fill="#ffffff" opacity="0.61"/><rect x="103.1" y="84.6" width="1.4" height="1.1" fill="#d8e4f8" opacity="0.97"/><rect x="117.8" y="56.9" width="1.5" height="1.2" fill="#d8e4f8" opacity="0.95"/><rect x="137.6" y="59.7" width="1.3" height="1.0" fill="#f0ecd8" opacity="0.87"/><rect x="33.4" y="77.1" width="1.4" height="1.1" fill="#b0c0d8" opacity="0.77"/><rect x="68.8" y="90.8" width="0.9" height="0.7" fill="#f0ecd8" opacity="0.97"/><rect x="131.7" y="84.5" width="1.5" height="1.2" fill="#f0ecd8" opacity="0.90"/><rect x="84.2" y="81.8" width="1.1" height="0.9" fill="#b0c0d8" opacity="0.95"/><rect x="74.2" y="67.6" width="0.7" height="0.6" fill="#f0ecd8" opacity="0.84"/><rect x="137.1" y="76.4" width="1.3" height="1.1" fill="#e8f0e0" opacity="0.58"/><rect x="42.1" y="77.1" width="1.3" height="1.1" fill="#ffffff" opacity="0.88"/><rect x="99.2" y="57.6" width="1.4" height="1.1" fill="#e8f0e0" opacity="0.94"/><rect x="21.6" y="81.8" width="1.4" height="1.1" fill="#f0ecd8" opacity="0.93"/><rect x="24.5" y="77.2" width="1.3" height="1.0" fill="#d8e4f8" opacity="0.73"/><rect x="57.6" y="59.7" width="1.1" height="0.9" fill="#b0c0d8" opacity="0.98"/><rect x="98.1" y="82.3" width="1.5" height="1.2" fill="#f0ecd8" opacity="0.86"/><rect x="77.6" y="79.1" width="1.2" height="1.0" fill="#f0ecd8" opacity="0.74"/><rect x="54.2" y="91.4" width="0.8" height="0.7" fill="#e8f0e0" opacity="0.92"/><rect x="88.7" y="64.0" width="0.9" height="0.7" fill="#d8e4f8" opacity="0.89"/><rect x="77.1" y="74.6" width="1.1" height="0.9" fill="#ffffff" opacity="0.90"/><rect x="75.5" y="64.3" width="1.3" height="1.0" fill="#d8e4f8" opacity="0.60"/><rect x="75.4" y="64.1" width="1.4" height="1.2" fill="#e8f0e0" opacity="0.65"/><rect x="69.5" y="87.8" width="0.7" height="0.6" fill="#ffffff" opacity="0.59"/><rect x="95.3" y="64.6" width="1.0" height="0.8" fill="#d8e4f8" opacity="0.60"/><rect x="59.2" y="71.2" width="1.2" height="1.0" fill="#ffffff" opacity="0.84"/><rect x="4.0" y="65.3" width="1.4" height="1.2" fill="#f0ecd8" opacity="0.71"/><rect x="84.3" y="64.6" width="0.9" height="0.7" fill="#b0c0d8" opacity="0.94"/><rect x="47.6" y="78.1" width="1.2" height="1.0" fill="#f0ecd8" opacity="0.64"/><rect x="66.4" y="63.2" width="1.2" height="1.0" fill="#e8f0e0" opacity="0.74"/><rect x="34.6" y="60.4" width="1.3" height="1.1" fill="#d8e4f8" opacity="0.78"/><rect x="26.7" y="78.3" width="1.5" height="1.2" fill="#d8e4f8" opacity="0.91"/><rect x="26.6" y="76.9" width="1.0" height="0.8" fill="#d8e4f8" opacity="0.98"/><rect x="70.4" y="65.1" width="1.2" height="0.9" fill="#e8f0e0" opacity="0.96"/><rect x="135.0" y="83.5" width="1.1" height="0.9" fill="#d8e4f8" opacity="0.78"/><rect x="76.7" y="61.9" width="1.3" height="1.0" fill="#f0ecd8" opacity="0.85"/><rect x="51.0" y="50.9" width="1.1" height="0.9" fill="#d8e4f8" opacity="0.89"/><rect x="112.0" y="85.9" width="1.5" height="1.2" fill="#b0c0d8" opacity="0.64"/><rect x="109.4" y="57.3" width="1.3" height="1.0" fill="#d8e4f8" opacity="0.76"/><rect x="55.3" y="79.0" width="1.2" height="0.9" fill="#d8e4f8" opacity="0.87"/><rect x="5.3" y="74.3" width="1.2" height="1.0" fill="#b0c0d8" opacity="0.79"/><rect x="96.7" y="79.9" width="1.4" height="1.1" fill="#e8f0e0" opacity="0.70"/><rect x="5.8" y="69.6" width="0.9" height="0.7" fill="#ffffff" opacity="0.97"/><rect x="10.4" y="76.8" width="1.3" height="1.0" fill="#d8e4f8" opacity="0.70"/><rect x="100.2" y="76.9" width="0.8" height="0.6" fill="#f0ecd8" opacity="0.79"/><rect x="22.7" y="89.1" width="1.4" height="1.1" fill="#b0c0d8" opacity="0.76"/><rect x="102.4" y="85.8" width="1.3" height="1.1" fill="#b0c0d8" opacity="0.88"/><rect x="69.8" y="64.3" width="0.7" height="0.6" fill="#ffffff" opacity="0.56"/><rect x="60.5" y="63.9" width="1.2" height="1.0" fill="#f0ecd8" opacity="0.64"/><rect x="35.0" y="56.8" width="1.0" height="0.8" fill="#f0ecd8" opacity="0.83"/><rect x="106.6" y="67.7" width="1.1" height="0.9" fill="#f0ecd8" opacity="0.89"/><rect x="29.6" y="90.4" width="1.4" height="1.1" fill="#ffffff" opacity="0.74"/><rect x="69.8" y="85.4" width="1.0" height="0.8" fill="#e8f0e0" opacity="0.63"/><rect x="101.0" y="61.8" width="1.1" height="0.9" fill="#d8e4f8" opacity="0.69"/><rect x="102.6" y="78.6" width="1.2" height="0.9" fill="#b0c0d8" opacity="0.77"/><rect x="81.3" y="92.1" width="0.8" height="0.6" fill="#d8e4f8" opacity="0.81"/><rect x="85.6" y="76.2" width="1.0" height="0.8" fill="#ffffff" opacity="0.92"/><rect x="42.3" y="60.5" width="1.5" height="1.2" fill="#d8e4f8" opacity="0.94"/><rect x="129.9" y="80.5" width="1.1" height="0.9" fill="#d8e4f8" opacity="0.99"/><rect x="124.7" y="61.6" width="1.1" height="0.9" fill="#b0c0d8" opacity="0.86"/><rect x="65.0" y="89.9" width="1.3" height="1.0" fill="#f0ecd8" opacity="0.80"/><rect x="38.7" y="66.3" width="1.1" height="0.9" fill="#ffffff" opacity="0.96"/><rect x="96.6" y="91.7" width="1.0" height="0.8" fill="#ffffff" opacity="0.72"/><rect x="106.7" y="62.0" width="1.4" height="1.1" fill="#ffffff" opacity="0.57"/><rect x="120.5" y="64.5" width="1.4" height="1.1" fill="#d8e4f8" opacity="0.78"/><rect x="56.2" y="54.7" width="1.0" height="0.8" fill="#d8e4f8" opacity="0.65"/><rect x="13.8" y="74.5" width="0.8" height="0.7" fill="#e8f0e0" opacity="0.90"/><rect x="4.3" y="65.3" width="0.8" height="0.6" fill="#ffffff" opacity="0.90"/><rect x="101.6" y="68.5" width="0.7" height="0.6" fill="#f0ecd8" opacity="0.89"/><rect x="35.0" y="87.5" width="1.1" height="0.9" fill="#e8f0e0" opacity="0.81"/><rect x="82.4" y="90.6" width="1.1" height="0.9" fill="#ffffff" opacity="0.61"/><rect x="107.0" y="62.1" width="1.4" height="1.1" fill="#d8e4f8" opacity="0.64"/><rect x="132.4" y="60.4" width="1.0" height="0.8" fill="#b0c0d8" opacity="0.76"/><rect x="72.9" y="86.7" width="0.8" height="0.7" fill="#f0ecd8" opacity="0.57"/><rect x="123.0" y="79.9" width="0.9" height="0.7" fill="#b0c0d8" opacity="0.58"/><rect x="41.3" y="72.7" width="1.2" height="0.9" fill="#f0ecd8" opacity="0.73"/><rect x="2.3" y="90.7" width="1.4" height="1.1" fill="#ffffff" opacity="0.80"/><rect x="46.2" y="70.9" width="1.5" height="1.2" fill="#ffffff" opacity="0.73"/><rect x="116.6" y="81.7" width="1.2" height="1.0" fill="#b0c0d8" opacity="0.91"/><rect x="40.2" y="73.6" width="1.2" height="1.0" fill="#f0ecd8" opacity="0.88"/><rect x="117.5" y="61.2" width="1.2" height="1.0" fill="#e8f0e0" opacity="0.83"/><rect x="121.1" y="62.8" width="1.5" height="1.2" fill="#d8e4f8" opacity="0.79"/><rect x="58.2" y="59.7" width="0.9" height="0.7" fill="#f0ecd8" opacity="0.61"/><rect x="22.4" y="74.2" width="1.3" height="1.1" fill="#ffffff" opacity="0.93"/><rect x="78.2" y="84.0" width="0.8" height="0.7" fill="#d8e4f8" opacity="0.63"/><rect x="97.1" y="63.2" width="1.2" height="0.9" fill="#f0ecd8" opacity="0.57"/><rect x="78.1" y="83.8" width="1.0" height="0.8" fill="#ffffff" opacity="0.95"/><rect x="5.2" y="88.6" width="1.1" height="0.8" fill="#e8f0e0" opacity="0.81"/><rect x="113.9" y="58.8" width="1.5" height="1.2" fill="#f0ecd8" opacity="0.66"/><rect x="112.0" y="87.4" width="1.1" height="0.9" fill="#b0c0d8" opacity="0.93"/><rect x="116.4" y="77.8" width="1.5" height="1.2" fill="#ffffff" opacity="0.62"/><rect x="21.4" y="90.1" width="0.7" height="0.6" fill="#d8e4f8" opacity="0.57"/><rect x="70.3" y="60.4" width="0.8" height="0.7" fill="#ffffff" opacity="0.79"/><rect x="49.4" y="63.5" width="1.0" height="0.8" fill="#d8e4f8" opacity="0.63"/><rect x="60.3" y="80.1" width="0.8" height="0.6" fill="#d8e4f8" opacity="0.77"/><rect x="23.6" y="79.0" width="0.8" height="0.7" fill="#b0c0d8" opacity="0.68"/><rect x="81.0" y="86.8" width="1.3" height="1.0" fill="#b0c0d8" opacity="0.75"/><rect x="55.2" y="80.6" width="1.1" height="0.9" fill="#f0ecd8" opacity="0.65"/><rect x="64.3" y="82.6" width="0.9" height="0.8" fill="#e8f0e0" opacity="0.88"/><rect x="6.7" y="89.4" width="1.3" height="1.0" fill="#e8f0e0" opacity="0.82"/><rect x="121.4" y="83.2" width="1.5" height="1.2" fill="#d8e4f8" opacity="0.76"/><rect x="87.5" y="85.1" width="0.8" height="0.6" fill="#ffffff" opacity="0.70"/><rect x="126.3" y="61.6" width="1.1" height="0.8" fill="#ffffff" opacity="0.83"/><rect x="13.9" y="85.2" width="1.4" height="1.1" fill="#b0c0d8" opacity="0.64"/><rect x="100.8" y="89.4" width="1.1" height="0.9" fill="#b0c0d8" opacity="0.73"/><rect x="135.2" y="92.4" width="1.1" height="0.9" fill="#f0ecd8" opacity="0.95"/><rect x="120.7" y="71.0" width="1.2" height="1.0" fill="#f0ecd8" opacity="0.85"/><rect x="106.9" y="81.9" width="1.4" height="1.2" fill="#d8e4f8" opacity="0.81"/><rect x="77.9" y="63.4" width="1.5" height="1.2" fill="#d8e4f8" opacity="0.78"/><rect x="109.8" y="85.1" width="1.3" height="1.0" fill="#d8e4f8" opacity="0.78"/><rect x="96.8" y="66.3" width="1.2" height="0.9" fill="#ffffff" opacity="0.74"/><rect x="109.5" y="68.4" width="0.8" height="0.6" fill="#f0ecd8" opacity="0.73"/><rect x="123.3" y="81.2" width="0.8" height="0.6" fill="#ffffff" opacity="0.68"/><rect x="109.0" y="90.0" width="1.2" height="0.9" fill="#e8f0e0" opacity="0.94"/><rect x="117.0" y="66.3" width="1.1" height="0.9" fill="#ffffff" opacity="0.79"/><rect x="35.6" y="83.0" width="1.4" height="1.1" fill="#ffffff" opacity="0.95"/><rect x="63.1" y="66.0" width="0.7" height="0.6" fill="#f0ecd8" opacity="0.63"/><rect x="81.3" y="53.5" width="0.9" height="0.7" fill="#ffffff" opacity="0.79"/><rect x="30.2" y="57.5" width="1.1" height="0.9" fill="#ffffff" opacity="0.68"/><rect x="104.7" y="52.0" width="1.2" height="1.0" fill="#b0c0d8" opacity="0.60"/><rect x="126.6" y="69.7" width="1.3" height="1.0" fill="#e8f0e0" opacity="0.66"/><rect x="20.6" y="76.6" width="1.2" height="1.0" fill="#d8e4f8" opacity="0.83"/><rect x="68.7" y="68.9" width="1.5" height="1.2" fill="#e8f0e0" opacity="0.73"/><rect x="79.3" y="63.4" width="1.3" height="1.0" fill="#f0ecd8" opacity="0.96"/><rect x="109.9" y="78.3" width="0.9" height="0.7" fill="#ffffff" opacity="0.71"/><rect x="2.0" y="75.7" width="1.5" height="1.2" fill="#e8f0e0" opacity="0.82"/><rect x="135.0" y="69.6" width="1.4" height="1.2" fill="#e8f0e0" opacity="0.76"/><rect x="70.2" y="50.5" width="0.8" height="0.6" fill="#d8e4f8" opacity="0.81"/><rect x="48.4" y="62.1" width="1.4" height="1.1" fill="#ffffff" opacity="0.78"/><rect x="108.0" y="88.9" width="0.7" height="0.6" fill="#d8e4f8" opacity="0.67"/><rect x="72.7" y="84.9" width="1.0" height="0.8" fill="#f0ecd8" opacity="0.83"/><rect x="43.5" y="89.0" width="1.1" height="0.9" fill="#e8f0e0" opacity="0.92"/><rect x="125.2" y="86.2" width="1.5" height="1.2" fill="#f0ecd8" opacity="0.70"/><rect x="115.0" y="92.0" width="0.8" height="0.6" fill="#ffffff" opacity="0.68"/><rect x="90.0" y="60.6" width="1.4" height="1.1" fill="#b0c0d8" opacity="0.85"/><rect x="70.0" y="70.8" width="1.3" height="1.1" fill="#f0ecd8" opacity="0.70"/><rect x="71.1" y="84.3" width="1.0" height="0.8" fill="#b0c0d8" opacity="0.66"/><rect x="48.5" y="56.0" width="1.0" height="0.8" fill="#ffffff" opacity="0.62"/><rect x="114.3" y="75.9" width="1.5" height="1.2" fill="#b0c0d8" opacity="0.94"/><rect x="101.0" y="76.4" width="1.2" height="1.0" fill="#b0c0d8" opacity="0.98"/><rect x="61.6" y="59.6" width="1.3" height="1.0" fill="#ffffff" opacity="0.91"/><rect x="114.8" y="59.3" width="1.1" height="0.9" fill="#b0c0d8" opacity="0.90"/><rect x="4.7" y="70.3" width="0.9" height="0.7" fill="#e8f0e0" opacity="0.90"/><rect x="108.1" y="65.7" width="0.9" height="0.7" fill="#b0c0d8" opacity="0.57"/><rect x="119.2" y="83.4" width="1.4" height="1.1" fill="#b0c0d8" opacity="0.60"/><rect x="16.4" y="86.8" width="1.1" height="0.8" fill="#e8f0e0" opacity="0.64"/><rect x="7.6" y="90.6" width="0.8" height="0.7" fill="#e8f0e0" opacity="0.94"/><rect x="41.0" y="71.5" width="1.2" height="0.9" fill="#b0c0d8" opacity="0.86"/><rect x="24.2" y="84.4" width="1.2" height="0.9" fill="#d8e4f8" opacity="0.86"/><rect x="107.9" y="83.7" width="1.3" height="1.1" fill="#ffffff" opacity="0.81"/><rect x="99.6" y="55.2" width="0.9" height="0.8" fill="#ffffff" opacity="0.59"/><rect x="35.6" y="76.3" width="0.7" height="0.6" fill="#b0c0d8" opacity="0.75"/><rect x="28.1" y="59.8" width="0.7" height="0.6" fill="#b0c0d8" opacity="0.63"/><rect x="5.2" y="91.6" width="1.3" height="1.0" fill="#d8e4f8" opacity="0.82"/><rect x="133.1" y="61.2" width="1.5" height="1.2" fill="#e8f0e0" opacity="0.90"/><rect x="136.2" y="77.5" width="1.2" height="0.9" fill="#b0c0d8" opacity="0.83"/><rect x="110.9" y="75.5" width="1.5" height="1.2" fill="#ffffff" opacity="0.61"/><rect x="73.1" y="79.6" width="1.1" height="0.9" fill="#f0ecd8" opacity="0.95"/><rect x="0.3" y="68.1" width="1.2" height="1.0" fill="#f0ecd8" opacity="0.95"/><rect x="137.8" y="61.1" width="1.2" height="0.9" fill="#d8e4f8" opacity="0.71"/><rect x="4.8" y="67.8" width="1.4" height="1.1" fill="#ffffff" opacity="0.68"/><rect x="45.9" y="68.3" width="0.9" height="0.7" fill="#f0ecd8" opacity="0.99"/><rect x="58.5" y="76.0" width="1.0" height="0.8" fill="#b0c0d8" opacity="0.60"/><rect x="113.8" y="87.1" width="1.3" height="1.0" fill="#b0c0d8" opacity="0.94"/><rect x="45.8" y="75.6" width="1.0" height="0.8" fill="#d8e4f8" opacity="0.89"/><rect x="85.7" y="84.6" width="0.9" height="0.7" fill="#b0c0d8" opacity="0.99"/><rect x="52.3" y="77.0" width="1.1" height="0.9" fill="#e8f0e0" opacity="0.93"/><rect x="67.0" y="69.8" width="1.4" height="1.1" fill="#f0ecd8" opacity="1.00"/><rect x="135.6" y="85.0" width="1.3" height="1.0" fill="#b0c0d8" opacity="0.72"/><rect x="24.7" y="64.6" width="1.4" height="1.1" fill="#f0ecd8" opacity="0.78"/><rect x="91.0" y="89.8" width="1.5" height="1.2" fill="#e8f0e0" opacity="0.66"/><rect x="120.4" y="81.8" width="0.7" height="0.6" fill="#b0c0d8" opacity="0.96"/><rect x="73.4" y="62.7" width="1.4" height="1.1" fill="#b0c0d8" opacity="0.83"/><rect x="80.4" y="51.8" width="1.2" height="1.0" fill="#b0c0d8" opacity="0.65"/><rect x="125.8" y="72.4" width="1.3" height="1.0" fill="#f0ecd8" opacity="0.71"/><rect x="104.0" y="54.3" width="1.4" height="1.1" fill="#f0ecd8" opacity="0.95"/><rect x="92.9" y="77.1" width="1.0" height="0.8" fill="#f0ecd8" opacity="0.80"/><rect x="101.9" y="87.4" width="1.5" height="1.2" fill="#d8e4f8" opacity="0.98"/><rect x="3.6" y="80.0" width="0.7" height="0.6" fill="#ffffff" opacity="0.84"/><rect x="50.8" y="78.3" width="1.0" height="0.8" fill="#e8f0e0" opacity="0.60"/><rect x="86.4" y="75.2" width="1.4" height="1.1" fill="#e8f0e0" opacity="0.85"/><rect x="91.9" y="81.7" width="0.8" height="0.6" fill="#f0ecd8" opacity="0.64"/><rect x="15.0" y="89.2" width="0.8" height="0.6" fill="#b0c0d8" opacity="0.59"/><rect x="7.7" y="77.4" width="0.7" height="0.6" fill="#d8e4f8" opacity="0.55"/><rect x="4.9" y="80.7" width="1.0" height="0.8" fill="#ffffff" opacity="0.62"/><rect x="92.8" y="68.7" width="1.5" height="1.2" fill="#e8f0e0" opacity="0.89"/><rect x="74.1" y="90.6" width="0.9" height="0.7" fill="#f0ecd8" opacity="0.61"/><rect x="53.8" y="75.6" width="1.1" height="0.9" fill="#f0ecd8" opacity="0.87"/><rect x="14.6" y="64.8" width="1.4" height="1.1" fill="#e8f0e0" opacity="0.92"/><rect x="35.9" y="85.0" width="1.5" height="1.2" fill="#d8e4f8" opacity="0.92"/><rect x="132.9" y="76.9" width="0.9" height="0.7" fill="#d8e4f8" opacity="0.90"/><rect x="60.6" y="87.5" width="0.7" height="0.6" fill="#d8e4f8" opacity="0.93"/><rect x="115.2" y="86.0" width="1.2" height="0.9" fill="#f0ecd8" opacity="0.93"/><rect x="92.0" y="72.4" width="1.3" height="1.0" fill="#d8e4f8" opacity="0.78"/><rect x="84.6" y="72.7" width="1.3" height="1.0" fill="#b0c0d8" opacity="0.63"/><rect x="70.6" y="76.8" width="0.9" height="0.7" fill="#b0c0d8" opacity="0.94"/><rect x="124.4" y="69.7" width="0.8" height="0.6" fill="#ffffff" opacity="0.85"/><rect x="125.3" y="83.8" width="0.7" height="0.6" fill="#b0c0d8" opacity="0.62"/><rect x="33.2" y="68.1" width="1.0" height="0.8" fill="#b0c0d8" opacity="0.56"/><rect x="74.6" y="57.5" width="0.8" height="0.6" fill="#d8e4f8" opacity="0.60"/><rect x="103.9" y="71.9" width="1.4" height="1.2" fill="#ffffff" opacity="0.58"/><rect x="81.4" y="77.9" width="0.9" height="0.7" fill="#f0ecd8" opacity="0.84"/><rect x="57.3" y="88.5" width="1.5" height="1.2" fill="#b0c0d8" opacity="0.85"/><rect x="59.3" y="92.6" width="1.1" height="0.8" fill="#f0ecd8" opacity="0.76"/><rect x="71.4" y="53.6" width="1.1" height="0.9" fill="#ffffff" opacity="0.81"/><rect x="125.4" y="76.2" width="1.4" height="1.1" fill="#f0ecd8" opacity="0.88"/><rect x="63.2" y="90.8" width="0.8" height="0.6" fill="#ffffff" opacity="0.97"/><rect x="3.7" y="91.4" width="1.3" height="1.1" fill="#e8f0e0" opacity="0.71"/><rect x="23.4" y="84.8" width="0.8" height="0.6" fill="#b0c0d8" opacity="0.72"/><rect x="60.2" y="75.7" width="1.4" height="1.1" fill="#e8f0e0" opacity="0.60"/><rect x="70.9" y="85.9" width="1.3" height="1.0" fill="#ffffff" opacity="0.89"/><rect x="111.5" y="61.5" width="1.3" height="1.0" fill="#f0ecd8" opacity="0.80"/><rect x="107.3" y="55.1" width="1.0" height="0.8" fill="#b0c0d8" opacity="0.87"/><rect x="119.4" y="83.5" width="1.3" height="1.0" fill="#ffffff" opacity="0.57"/><rect x="77.6" y="58.5" width="0.8" height="0.6" fill="#e8f0e0" opacity="0.96"/><rect x="82.1" y="63.5" width="0.9" height="0.7" fill="#ffffff" opacity="0.90"/><rect x="9.0" y="74.5" width="0.7" height="0.6" fill="#f0ecd8" opacity="0.59"/><rect x="88.7" y="83.4" width="1.5" height="1.2" fill="#e8f0e0" opacity="0.87"/><rect x="58.8" y="90.8" width="0.8" height="0.6" fill="#f0ecd8" opacity="0.85"/><rect x="54.2" y="62.6" width="1.1" height="0.9" fill="#b0c0d8" opacity="0.63"/><rect x="84.3" y="69.5" width="1.3" height="1.1" fill="#b0c0d8" opacity="0.91"/><rect x="79.2" y="78.2" width="0.8" height="0.6" fill="#f0ecd8" opacity="0.79"/><rect x="88.6" y="77.2" width="0.9" height="0.7" fill="#d8e4f8" opacity="0.74"/><rect x="106.7" y="92.1" width="1.4" height="1.1" fill="#e8f0e0" opacity="0.99"/><rect x="70.7" y="76.0" width="0.8" height="0.6" fill="#ffffff" opacity="0.64"/><rect x="55.8" y="78.8" width="0.8" height="0.6" fill="#e8f0e0" opacity="0.97"/><rect x="59.1" y="69.0" width="1.4" height="1.1" fill="#f0ecd8" opacity="0.69"/><rect x="121.8" y="88.6" width="0.9" height="0.7" fill="#ffffff" opacity="0.87"/><rect x="85.5" y="86.0" width="1.1" height="0.8" fill="#ffffff" opacity="0.62"/><rect x="60.5" y="56.5" width="1.3" height="1.1" fill="#e8f0e0" opacity="0.64"/><rect x="99.6" y="84.4" width="1.1" height="0.9" fill="#ffffff" opacity="0.94"/><rect x="83.2" y="76.3" width="1.0" height="0.8" fill="#ffffff" opacity="0.64"/><rect x="71.1" y="55.6" width="1.4" height="1.2" fill="#b0c0d8" opacity="0.65"/><rect x="137.9" y="73.1" width="1.1" height="0.9" fill="#b0c0d8" opacity="0.75"/><rect x="89.7" y="66.8" width="1.5" height="1.2" fill="#e8f0e0" opacity="0.61"/><rect x="118.5" y="82.3" width="0.7" height="0.6" fill="#f0ecd8" opacity="0.75"/><rect x="0.0" y="62.7" width="1.4" height="1.1" fill="#d8e4f8" opacity="0.91"/><rect x="111.8" y="52.6" width="1.2" height="1.0" fill="#ffffff" opacity="0.77"/><rect x="37.4" y="67.8" width="1.1" height="0.9" fill="#b0c0d8" opacity="0.74"/><rect x="123.5" y="76.8" width="1.1" height="0.9" fill="#e8f0e0" opacity="0.63"/><rect x="101.9" y="88.3" width="0.9" height="0.7" fill="#ffffff" opacity="0.75"/><rect x="64.5" y="80.2" width="1.4" height="1.1" fill="#d8e4f8" opacity="0.89"/><rect x="34.5" y="82.9" width="1.0" height="0.8" fill="#ffffff" opacity="0.59"/><rect x="79.3" y="85.5" width="1.5" height="1.2" fill="#b0c0d8" opacity="0.74"/><rect x="72.9" y="52.2" width="0.8" height="0.6" fill="#ffffff" opacity="0.63"/><rect x="62.8" y="73.4" width="1.2" height="0.9" fill="#ffffff" opacity="0.58"/><rect x="113.4" y="87.1" width="1.2" height="0.9" fill="#d8e4f8" opacity="0.72"/><rect x="72.5" y="69.0" width="1.1" height="0.9" fill="#b0c0d8" opacity="0.96"/><rect x="103.2" y="80.0" width="1.1" height="0.8" fill="#e8f0e0" opacity="0.70"/><rect x="86.6" y="89.8" width="0.9" height="0.7" fill="#f0ecd8" opacity="0.99"/><rect x="134.7" y="62.8" width="1.0" height="0.8" fill="#f0ecd8" opacity="0.78"/><rect x="100.3" y="60.2" width="1.1" height="0.9" fill="#ffffff" opacity="0.99"/><rect x="34.4" y="75.7" width="1.1" height="0.9" fill="#f0ecd8" opacity="0.86"/><rect x="91.3" y="82.5" width="1.2" height="1.0" fill="#f0ecd8" opacity="0.87"/><rect x="34.8" y="87.6" width="0.7" height="0.6" fill="#b0c0d8" opacity="0.69"/><rect x="56.9" y="56.4" width="1.4" height="1.1" fill="#d8e4f8" opacity="0.65"/><rect x="49.4" y="74.8" width="0.8" height="0.6" fill="#e8f0e0" opacity="0.90"/><rect x="86.5" y="77.6" width="1.1" height="0.9" fill="#ffffff" opacity="0.60"/><rect x="10.5" y="91.8" width="1.5" height="1.2" fill="#e8f0e0" opacity="0.66"/><rect x="18.0" y="62.7" width="1.4" height="1.2" fill="#f0ecd8" opacity="0.97"/><rect x="55.1" y="71.4" width="0.9" height="0.8" fill="#f0ecd8" opacity="0.80"/><rect x="44.9" y="69.0" width="1.3" height="1.0" fill="#f0ecd8" opacity="0.94"/><rect x="60.8" y="63.4" width="0.8" height="0.7" fill="#ffffff" opacity="0.97"/><rect x="43.7" y="75.1" width="1.0" height="0.8" fill="#d8e4f8" opacity="0.64"/><rect x="79.6" y="62.5" width="0.8" height="0.6" fill="#e8f0e0" opacity="0.86"/><rect x="36.9" y="74.2" width="0.8" height="0.7" fill="#ffffff" opacity="0.70"/><rect x="98.6" y="79.1" width="0.7" height="0.6" fill="#b0c0d8" opacity="0.73"/><rect x="48.2" y="87.6" width="1.4" height="1.1" fill="#e8f0e0" opacity="0.74"/><rect x="10.1" y="83.8" width="0.7" height="0.6" fill="#ffffff" opacity="0.83"/><rect x="122.7" y="66.8" width="1.5" height="1.2" fill="#e8f0e0" opacity="0.67"/><rect x="132.0" y="87.8" width="0.9" height="0.7" fill="#f0ecd8" opacity="0.93"/><rect x="100.8" y="80.8" width="0.8" height="0.7" fill="#f0ecd8" opacity="0.65"/><rect x="137.1" y="63.9" width="1.1" height="0.9" fill="#b0c0d8" opacity="0.78"/><rect x="40.0" y="80.7" width="1.4" height="1.1" fill="#b0c0d8" opacity="0.86"/><rect x="48.6" y="79.3" width="1.1" height="0.8" fill="#f0ecd8" opacity="0.93"/><rect x="4.0" y="64.4" width="1.4" height="1.1" fill="#f0ecd8" opacity="0.89"/><rect x="125.7" y="80.1" width="1.4" height="1.1" fill="#ffffff" opacity="0.79"/><rect x="12.9" y="71.7" width="0.8" height="0.6" fill="#e8f0e0" opacity="0.95"/><rect x="98.8" y="58.5" width="0.8" height="0.7" fill="#d8e4f8" opacity="0.63"/><rect x="75.6" y="52.7" width="0.9" height="0.7" fill="#d8e4f8" opacity="0.64"/><rect x="76.9" y="76.6" width="1.2" height="1.0" fill="#f0ecd8" opacity="0.91"/><rect x="97.7" y="87.6" width="1.1" height="0.9" fill="#d8e4f8" opacity="0.56"/><rect x="61.4" y="58.8" width="1.3" height="1.1" fill="#e8f0e0" opacity="0.72"/><rect x="122.4" y="70.7" width="1.0" height="0.8" fill="#d8e4f8" opacity="0.58"/><rect x="129.2" y="80.2" width="1.1" height="0.9" fill="#b0c0d8" opacity="0.89"/><rect x="22.7" y="89.7" width="1.3" height="1.0" fill="#ffffff" opacity="0.74"/><rect x="29.5" y="87.9" width="1.2" height="0.9" fill="#e8f0e0" opacity="0.77"/><rect x="88.5" y="65.9" width="1.1" height="0.9" fill="#e8f0e0" opacity="0.64"/><rect x="78.8" y="57.3" width="1.3" height="1.0" fill="#b0c0d8" opacity="0.68"/><rect x="3.8" y="68.6" width="1.3" height="1.0" fill="#f0ecd8" opacity="1.00"/><rect x="57.2" y="76.1" width="1.0" height="0.8" fill="#ffffff" opacity="0.82"/><rect x="102.1" y="70.1" width="1.2" height="0.9" fill="#e8f0e0" opacity="0.56"/><rect x="76.1" y="85.4" width="0.8" height="0.6" fill="#f0ecd8" opacity="0.87"/><rect x="36.9" y="82.1" width="0.8" height="0.6" fill="#b0c0d8" opacity="0.89"/><rect x="95.9" y="63.5" width="1.2" height="1.0" fill="#b0c0d8" opacity="1.00"/><rect x="137.0" y="83.3" width="1.1" height="0.9" fill="#e8f0e0" opacity="0.81"/><rect x="63.7" y="69.2" width="1.5" height="1.2" fill="#ffffff" opacity="0.86"/><rect x="124.2" y="84.2" width="1.3" height="1.0" fill="#f0ecd8" opacity="0.68"/><rect x="83.1" y="70.4" width="1.4" height="1.1" fill="#b0c0d8" opacity="0.68"/><rect x="62.2" y="89.5" width="1.0" height="0.8" fill="#e8f0e0" opacity="0.85"/><rect x="78.7" y="53.6" width="0.9" height="0.7" fill="#d8e4f8" opacity="0.68"/><rect x="12.6" y="84.2" width="1.2" height="1.0" fill="#b0c0d8" opacity="0.78"/><rect x="17.4" y="77.6" width="1.3" height="1.0" fill="#d8e4f8" opacity="0.76"/><rect x="124.0" y="89.1" width="1.4" height="1.2" fill="#b0c0d8" opacity="0.82"/><rect x="57.9" y="81.1" width="0.9" height="0.7" fill="#e8f0e0" opacity="0.72"/><rect x="23.1" y="77.9" width="1.2" height="1.0" fill="#f0ecd8" opacity="0.90"/><rect x="39.6" y="75.5" width="1.2" height="1.0" fill="#e8f0e0" opacity="0.63"/><rect x="39.4" y="62.6" width="1.1" height="0.8" fill="#d8e4f8" opacity="0.77"/><rect x="100.1" y="73.7" width="1.2" height="0.9" fill="#d8e4f8" opacity="0.96"/><rect x="59.4" y="54.2" width="1.1" height="0.9" fill="#ffffff" opacity="0.55"/><rect x="11.7" y="89.7" width="1.3" height="1.0" fill="#e8f0e0" opacity="0.82"/><rect x="34.7" y="75.7" width="1.0" height="0.8" fill="#f0ecd8" opacity="0.66"/><rect x="69.8" y="87.8" width="1.2" height="1.0" fill="#b0c0d8" opacity="0.86"/><rect x="86.7" y="57.3" width="1.4" height="1.1" fill="#e8f0e0" opacity="0.77"/><rect x="57.5" y="86.7" width="0.8" height="0.6" fill="#d8e4f8" opacity="0.75"/><rect x="98.3" y="66.6" width="1.4" height="1.1" fill="#d8e4f8" opacity="0.69"/><rect x="5.3" y="73.1" width="0.9" height="0.7" fill="#b0c0d8" opacity="0.96"/><rect x="45.0" y="59.4" width="0.7" height="0.6" fill="#ffffff" opacity="0.85"/><rect x="71.0" y="63.2" width="1.4" height="1.1" fill="#d8e4f8" opacity="0.56"/><rect x="97.6" y="72.0" width="0.9" height="0.8" fill="#d8e4f8" opacity="0.56"/><rect x="21.4" y="85.7" width="1.3" height="1.0" fill="#ffffff" opacity="0.90"/><rect x="50.5" y="63.2" width="0.9" height="0.7" fill="#f0ecd8" opacity="0.93"/><rect x="66.0" y="89.3" width="1.1" height="0.9" fill="#e8f0e0" opacity="0.57"/><rect x="64.2" y="68.1" width="1.0" height="0.8" fill="#e8f0e0" opacity="0.73"/><rect x="118.0" y="83.8" width="1.4" height="1.1" fill="#d8e4f8" opacity="0.89"/><rect x="18.5" y="81.5" width="1.2" height="1.0" fill="#f0ecd8" opacity="0.72"/><rect x="128.6" y="71.1" width="1.0" height="0.8" fill="#f0ecd8" opacity="0.78"/><rect x="75.9" y="64.2" width="1.0" height="0.8" fill="#b0c0d8" opacity="0.79"/><rect x="6.8" y="62.5" width="0.7" height="0.6" fill="#ffffff" opacity="0.99"/><rect x="44.9" y="62.3" width="0.8" height="0.6" fill="#ffffff" opacity="0.97"/><rect x="74.8" y="78.0" width="1.1" height="0.9" fill="#e8f0e0" opacity="0.69"/><rect x="96.8" y="85.2" width="1.1" height="0.8" fill="#d8e4f8" opacity="0.94"/><rect x="30.0" y="83.6" width="1.2" height="1.0" fill="#ffffff" opacity="0.91"/><rect x="22.8" y="73.8" width="1.4" height="1.2" fill="#ffffff" opacity="0.86"/><rect x="78.0" y="53.9" width="1.0" height="0.8" fill="#ffffff" opacity="0.69"/><rect x="98.0" y="66.4" width="0.9" height="0.7" fill="#f0ecd8" opacity="0.63"/><rect x="115.8" y="71.2" width="1.2" height="0.9" fill="#ffffff" opacity="0.98"/><rect x="122.2" y="88.1" width="1.4" height="1.1" fill="#b0c0d8" opacity="0.93"/><rect x="127.9" y="85.9" width="1.1" height="0.9" fill="#ffffff" opacity="0.77"/><rect x="70.1" y="75.5" width="1.0" height="0.8" fill="#d8e4f8" opacity="0.96"/><rect x="117.8" y="72.8" width="1.4" height="1.1" fill="#e8f0e0" opacity="0.90"/><rect x="45.6" y="61.4" width="1.2" height="1.0" fill="#f0ecd8" opacity="0.90"/><rect x="10.8" y="72.3" width="1.2" height="1.0" fill="#ffffff" opacity="0.99"/><rect x="7.2" y="72.9" width="0.9" height="0.7" fill="#d8e4f8" opacity="0.96"/><rect x="28.7" y="82.7" width="0.8" height="0.6" fill="#f0ecd8" opacity="0.92"/><rect x="80.7" y="86.9" width="0.9" height="0.7" fill="#d8e4f8" opacity="0.57"/><rect x="11.7" y="79.4" width="0.8" height="0.7" fill="#e8f0e0" opacity="0.59"/><rect x="83.8" y="82.9" width="1.2" height="1.0" fill="#ffffff" opacity="0.61"/><rect x="133.0" y="62.8" width="0.8" height="0.7" fill="#d8e4f8" opacity="0.92"/><rect x="80.4" y="52.9" width="0.9" height="0.7" fill="#d8e4f8" opacity="0.57"/><rect x="73.0" y="88.9" width="0.8" height="0.6" fill="#d8e4f8" opacity="0.68"/><rect x="112.5" y="88.1" width="0.7" height="0.6" fill="#e8f0e0" opacity="0.59"/><rect x="55.5" y="71.9" width="1.3" height="1.0" fill="#b0c0d8" opacity="0.95"/><rect x="115.1" y="82.6" width="1.1" height="0.9" fill="#b0c0d8" opacity="0.89"/><rect x="0.3" y="84.9" width="1.2" height="0.9" fill="#ffffff" opacity="0.60"/><rect x="115.2" y="66.9" width="1.5" height="1.2" fill="#f0ecd8" opacity="0.70"/><rect x="110.6" y="84.4" width="1.3" height="1.1" fill="#e8f0e0" opacity="0.59"/><rect x="91.9" y="78.6" width="1.4" height="1.2" fill="#e8f0e0" opacity="0.62"/><rect x="98.3" y="66.0" width="0.7" height="0.6" fill="#b0c0d8" opacity="0.84"/><rect x="115.0" y="57.9" width="0.8" height="0.7" fill="#ffffff" opacity="0.75"/><rect x="60.4" y="91.1" width="0.9" height="0.7" fill="#e8f0e0" opacity="0.96"/><rect x="106.8" y="82.6" width="1.1" height="0.9" fill="#f0ecd8" opacity="0.87"/><rect x="127.6" y="89.1" width="1.5" height="1.2" fill="#e8f0e0" opacity="0.70"/><rect x="104.8" y="69.4" width="0.8" height="0.6" fill="#e8f0e0" opacity="0.96"/><rect x="42.8" y="84.6" width="1.4" height="1.1" fill="#d8e4f8" opacity="0.83"/><rect x="38.8" y="85.6" width="0.9" height="0.7" fill="#b0c0d8" opacity="0.88"/><rect x="77.0" y="69.0" width="1.4" height="1.1" fill="#b0c0d8" opacity="0.88"/><rect x="104.7" y="81.5" width="1.4" height="1.1" fill="#f0ecd8" opacity="0.90"/><rect x="31.3" y="92.3" width="1.5" height="1.2" fill="#e8f0e0" opacity="0.86"/><rect x="20.5" y="61.6" width="0.8" height="0.6" fill="#b0c0d8" opacity="0.60"/><rect x="29.1" y="60.5" width="1.3" height="1.0" fill="#d8e4f8" opacity="0.95"/><rect x="28.5" y="87.1" width="1.0" height="0.8" fill="#f0ecd8" opacity="0.93"/><rect x="56.3" y="66.8" width="1.3" height="1.0" fill="#b0c0d8" opacity="0.58"/><rect x="69.9" y="88.3" width="1.1" height="0.8" fill="#e8f0e0" opacity="0.64"/><rect x="44.6" y="77.6" width="1.3" height="1.0" fill="#f0ecd8" opacity="0.66"/><rect x="82.3" y="83.3" width="1.1" height="0.9" fill="#f0ecd8" opacity="0.83"/><rect x="74.6" y="72.5" width="1.3" height="1.0" fill="#d8e4f8" opacity="0.71"/><rect x="102.7" y="77.6" width="1.2" height="0.9" fill="#ffffff" opacity="0.99"/><rect x="51.5" y="72.9" width="1.5" height="1.2" fill="#f0ecd8" opacity="0.56"/><rect x="98.4" y="71.7" width="1.1" height="0.9" fill="#d8e4f8" opacity="0.71"/><rect x="45.2" y="73.7" width="1.1" height="0.9" fill="#e8f0e0" opacity="0.90"/><rect x="17.7" y="67.9" width="0.9" height="0.7" fill="#e8f0e0" opacity="0.87"/><rect x="90.1" y="82.7" width="1.0" height="0.8" fill="#f0ecd8" opacity="0.57"/><rect x="34.5" y="62.9" width="1.2" height="1.0" fill="#d8e4f8" opacity="0.60"/><rect x="62.8" y="82.6" width="1.1" height="0.9" fill="#e8f0e0" opacity="0.81"/><rect x="23.9" y="60.4" width="1.5" height="1.2" fill="#e8f0e0" opacity="0.63"/><circle cx="3.5" cy="53.0" r="0.9" fill="#e8f2ff"/><circle cx="3.5" cy="57.6" r="0.9" fill="#e8f2ff"/><circle cx="3.5" cy="62.2" r="0.9" fill="#e8f2ff"/><circle cx="9.0" cy="53.9" r="0.9" fill="#e8f2ff"/><circle cx="9.0" cy="58.5" r="0.9" fill="#e8f2ff"/><circle cx="9.0" cy="63.1" r="0.9" fill="#e8f2ff"/><circle cx="14.5" cy="54.8" r="0.9" fill="#e8f2ff"/><circle cx="14.5" cy="59.4" r="0.9" fill="#e8f2ff"/><circle cx="14.5" cy="64.0" r="0.9" fill="#e8f2ff"/><circle cx="20.0" cy="55.7" r="0.9" fill="#e8f2ff"/><circle cx="20.0" cy="60.3" r="0.9" fill="#e8f2ff"/><circle cx="20.0" cy="64.9" r="0.9" fill="#e8f2ff"/><circle cx="25.5" cy="56.6" r="0.9" fill="#e8f2ff"/><circle cx="25.5" cy="61.2" r="0.9" fill="#e8f2ff"/><circle cx="25.5" cy="65.8" r="0.9" fill="#e8f2ff"/><circle cx="31.0" cy="57.5" r="0.9" fill="#e8f2ff"/><circle cx="31.0" cy="62.1" r="0.9" fill="#e8f2ff"/><circle cx="31.0" cy="66.7" r="0.9" fill="#e8f2ff"/><path d="M0 66L60 72L138 78V82L60 76L0 71Z" fill="#06090f" opacity="0.9"/><path d="M0 65.5L60 71.5L138 77.5" stroke="#f8e6b0" stroke-width="0.6" stroke-dasharray="1.2 1.2" fill="none" opacity="0.9"/><rect x="127" y="62" width="7" height="30.7" fill="#06090f" opacity="0.9"/></svg>

<!-- context menu -->
<div class="a" style="left:342.5px;top:242.6px;width:223.6px;height:286.6px;background:#878787;"></div>
<div class="a" style="left:342.5px;top:242.6px;width:221.7px;height:284.7px;background:#f0f0f0;box-shadow:inset 1px 1px 0 #a8a8a8;"></div>
<div class="t" style="left:368.1px;top:246.40px;font-size:8.85px;">Переместить выбранное</div>
<svg style="left:554.3px;top:249.9px" width="3.5" height="6.5" viewBox="0 0 3.5 6.5"><path d="M0 0L3.5 3.25L0 6.5Z" fill="#111"/></svg>
<div class="t" style="left:368.1px;top:262.40px;font-size:8.85px;">Отметить</div>
<svg style="left:554.3px;top:265.9px" width="3.5" height="6.5" viewBox="0 0 3.5 6.5"><path d="M0 0L3.5 3.25L0 6.5Z" fill="#111"/></svg>
<div class="t" style="left:368.1px;top:278.90px;font-size:8.85px;">Выделить</div>
<svg style="left:554.3px;top:282.4px" width="3.5" height="6.5" viewBox="0 0 3.5 6.5"><path d="M0 0L3.5 3.25L0 6.5Z" fill="#111"/></svg>
<div class="t" style="left:368.1px;top:295.40px;font-size:8.85px;">Сортировать по</div>
<svg style="left:554.3px;top:298.9px" width="3.5" height="6.5" viewBox="0 0 3.5 6.5"><path d="M0 0L3.5 3.25L0 6.5Z" fill="#111"/></svg>
<div class="t" style="left:368.1px;top:316.50px;font-size:8.85px;">Добавить...</div>
<div class="t" style="left:535.8px;top:316.50px;font-size:8.85px;">Ins</div>
<svg style="left:349.7px;top:318.8px" width="6.2" height="9" viewBox="0 0 6.2 9"><path d="M0 0H4L6.2 2.2V9H0Z" fill="#6cb2f0"/><path d="M1 4.2H5.2M1 6.2H5.2" stroke="#2f7cc8" stroke-width="0.8"/><path d="M1 1.5H3" stroke="#2f6ab0" stroke-width="0.8"/></svg>
<div class="t" style="left:368.1px;top:333.00px;font-size:8.85px;">Удалить</div>
<div class="t" style="left:534.6px;top:333.00px;font-size:8.85px;">Del</div>
<svg style="left:349.2px;top:335.8px" width="7" height="7" viewBox="0 0 7 7"><path d="M0.5 0.5L6.5 6.5M6.5 0.5L0.5 6.5" stroke="#d04856" stroke-width="1.1"/></svg>
<div class="t" style="left:368.1px;top:349.30px;font-size:8.85px;">Remove erroneous items</div>
<div class="t" style="left:368.1px;top:370.30px;font-size:8.85px;">Запустить</div>
<div class="t" style="left:368.1px;top:387.00px;font-size:8.85px;">Открыть расположение файла</div>
<div class="t" style="left:368.1px;top:403.20px;font-size:8.85px;">Свойства...</div>
<div class="t" style="left:368.1px;top:419.20px;font-size:8.85px;">Переопределить новое имя файла...</div>
<div class="t" style="left:535.8px;top:419.20px;font-size:8.85px;">F2</div>
<svg style="left:348px;top:422px" width="10" height="8" viewBox="0 0 10 8"><rect x="0" y="2" width="6" height="4" fill="#8cc0f0"/><path d="M6.5 0.5H9M6.5 7.5H9M7.75 0.5V7.5" stroke="#3a6ec8" stroke-width="1.1"/></svg>
<div class="t" style="left:368.1px;top:440.50px;font-size:8.85px;">Загрузить список...</div>
<svg style="left:348.2px;top:443.5px" width="8.5" height="7" viewBox="0 0 8.5 7"><path d="M0 0H3.3L4.3 1H8.5V7H0Z" fill="#f5c211"/></svg>
<div class="t" style="left:368.1px;top:457.00px;font-size:8.85px;">Сохранить список</div>
<svg style="left:554.3px;top:460.5px" width="3.5" height="6.5" viewBox="0 0 3.5 6.5"><path d="M0 0L3.5 3.25L0 6.5Z" fill="#111"/></svg>
<svg style="left:348.5px;top:459.5px" width="8.5" height="8.5" viewBox="0 0 8.5 8.5"><rect x="0.5" y="0.5" width="7.5" height="7.5" fill="#fff" stroke="#d2464e" stroke-width="1"/><rect x="0.5" y="0.5" width="7.5" height="3.2" fill="#d2464e"/><rect x="2.2" y="1.2" width="1.1" height="1.6" fill="#fff"/><rect x="5.2" y="1.2" width="1.1" height="1.6" fill="#fff"/></svg>
<div class="t" style="left:368.1px;top:473.40px;font-size:8.85px;">Очистить список</div>
<svg style="left:347.5px;top:477.5px" width="11" height="5.5" viewBox="0 0 11 5.5"><path d="M2.5 0H11V5.5H2.5L0 2.75Z" fill="#e8561e"/><path d="M5.5 1.8L7.5 3.7M7.5 1.8L5.5 3.7" stroke="#fff" stroke-width="0.8"/></svg>
<div class="t" style="left:368.1px;top:489.90px;font-size:8.85px;">Случайная сортировка</div>
<svg style="left:348.5px;top:493px" width="8.5" height="7" viewBox="0 0 8.5 7"><path d="M0 1H2L6 6H8M0 6H2L6 1H8" stroke="#3a7ad0" stroke-width="1" fill="none"/></svg>
<div class="t" style="left:368.1px;top:511.30px;font-size:8.85px;">Обновить</div>
<div class="t" style="left:535.8px;top:511.30px;font-size:8.85px;">F5</div>
<svg style="left:349px;top:513.2px" width="7.5" height="9" viewBox="0 0 7.5 9"><path d="M6.5 3A3 3 0 0 0 1 3M1 6A3 3 0 0 0 6.5 6" stroke="#4a8ad8" stroke-width="1.2" fill="none"/><path d="M0 1.2L1 3.5L3 2.5M7.5 7.8L6.5 5.5L4.5 6.5" stroke="#4a8ad8" stroke-width="1" fill="none"/></svg>
<div class="a" style="left:368.5px;top:311.5px;width:194.5px;height:1px;background:#d7d7d7;"></div>
<div class="a" style="left:368.5px;top:365.0px;width:194.5px;height:1px;background:#d7d7d7;"></div>
<div class="a" style="left:368.5px;top:436.2px;width:194.5px;height:1px;background:#d7d7d7;"></div>
<div class="a" style="left:368.5px;top:506.0px;width:194.5px;height:1px;background:#d7d7d7;"></div>

</body></html>
